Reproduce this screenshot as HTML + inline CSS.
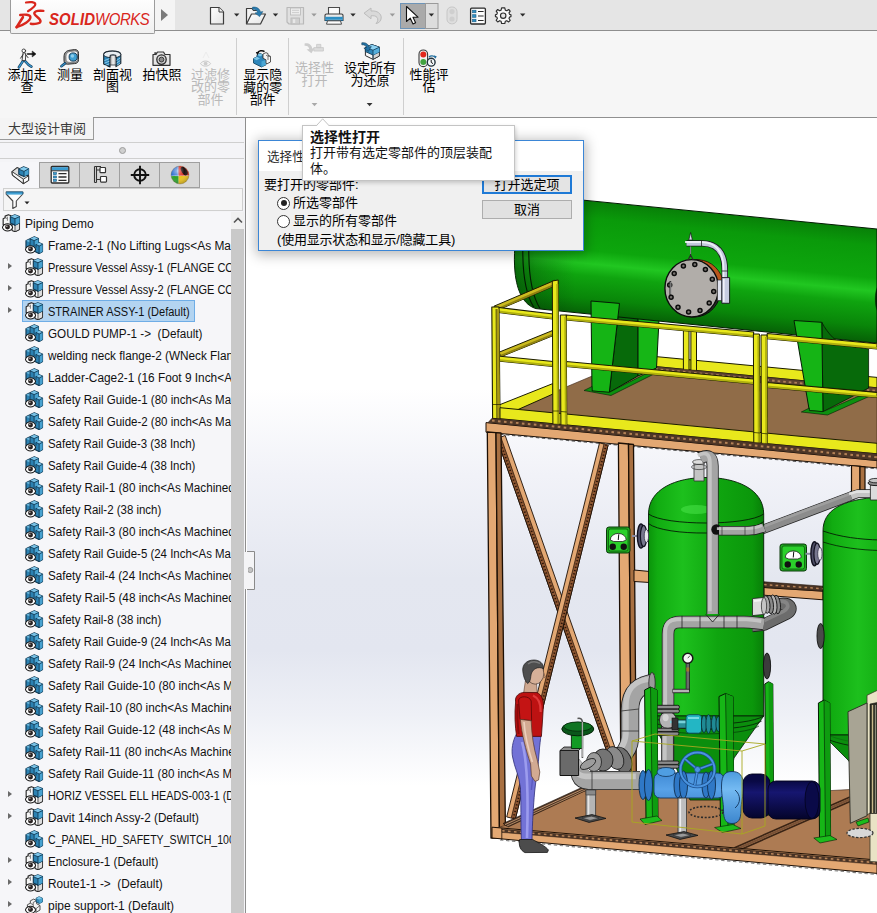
<!DOCTYPE html>
<html lang="zh"><head><meta charset="utf-8"><title>SOLIDWORKS</title>
<style>
html,body{margin:0;padding:0}
body{width:877px;height:913px;overflow:hidden;position:relative;background:#fff;font-family:"Liberation Sans","Noto Sans CJK SC",sans-serif;font-size:12px;color:#1a1a1a}
.abs{position:absolute}
#titlebar{left:0;top:0;width:877px;height:30px;background:#e5e5e5;border-bottom:1px solid #8e8e8e}
#ribbon{left:0;top:31px;width:877px;height:87px;background:#f6f6f6}
#ribline{left:93px;top:117px;width:784px;height:1px;background:#909090}
#logo{left:10px;top:-1px;width:145px;height:35px;background:linear-gradient(#fefefe,#f1f1f1);border:1px solid #9c9c9c;border-top:none;box-sizing:border-box;border-radius:0 0 2px 2px}
#logoext{left:154px;top:0;width:21px;height:30px;background:#f4f4f4}
.rb{position:absolute;text-align:center;font-size:13px;line-height:12.5px;color:#000;white-space:nowrap}
.rb.dis{color:#b9b9b9}
.sep{position:absolute;width:1px;background:#cfcfcf}
#left{left:0;top:118px;width:246px;height:795px;background:#f4f4f7;border-right:1px solid #8e8e8e;box-sizing:border-box;overflow:hidden}
#view{left:247px;top:118px;width:630px;height:795px;overflow:hidden;background:#fff}
#tree{position:absolute;left:0;top:94px;width:231px;height:701px;overflow:hidden;background:#f6f6f9}
.row{position:absolute;left:48px;height:22px;line-height:22px;white-space:nowrap;font-size:12px;color:#111;transform-origin:0 50%}
.ic{position:absolute;width:18.4px;height:18.4px}
.tri{position:absolute;left:8px;width:0;height:0;border-left:4.5px solid #6a6a6a;border-top:3.7px solid transparent;border-bottom:3.7px solid transparent}
.hl{position:absolute;background:#eee}
</style></head><body>
<svg width="0" height="0" style="position:absolute"><defs>
<linearGradient id="gb1" x1="0" y1="0" x2="1" y2="1"><stop offset="0" stop-color="#7cc4e6"/><stop offset="1" stop-color="#2f86b5"/></linearGradient>
<g id="eye"><path d="M0.4 13.8 C2.4 8.8 9 8.8 11 13.8 C9 18.8 2.4 18.8 0.4 13.8Z" fill="#fff" stroke="#161616" stroke-width="1.05"/><circle cx="5.7" cy="13.5" r="2.55" fill="#2a2424"/><circle cx="5" cy="12.7" r="0.8" fill="#c5bebb"/></g>
<symbol id="i-part" viewBox="0 0 19 19">
<path d="M1 5 L4.6 3.2 L5.2 3.5 L5.2 2.8 L9.6 0.7 L13.9 2.7 L13.9 6.6 L14.8 6.9 L18.2 8.5 L18.2 16 L14.6 18.2 L9.2 15.6 L1 11.8Z" fill="#2c82b2" stroke="#123a54" stroke-width="1.2" stroke-linejoin="round"/>
<path d="M5.2 2.8 L9.6 0.8 L13.9 2.7 L9.4 4.8Z" fill="#79c2e6"/>
<path d="M9.4 4.8 L13.9 2.7 L13.9 7.2 L11.4 8.6 L9.4 9.6Z" fill="#48a2d0"/>
<path d="M1 5 L4.6 3.3 L5.2 3.6 L5.2 6.8Z" fill="#6ab6dc"/>
<path d="M11.4 8.6 L14.8 6.9 L18.2 8.5 L14.6 10.4Z" fill="#79c2e6"/>
<path d="M14.6 10.4 L18.2 8.5 L18.2 16 L14.6 18.2Z" fill="#48a2d0"/>
<path d="M5.2 2.8 L5.2 9.6 M5.2 2.8 L9.4 4.8 L13.9 2.7 M9.4 4.8 L9.4 10.5 M11.4 8.6 L14.6 10.4 L18.2 8.5 M14.6 10.4 L14.6 18.2 M11.4 8.6 L11.4 12" fill="none" stroke="#123a54" stroke-width="0.9"/>
<use href="#eye"/>
</symbol>
<symbol id="i-assy" viewBox="0 0 19 19">
<path d="M1.2 9.4 L1.2 4.8 L3.2 3.8 L3.2 2.2 L6.6 0.7 L9.4 1.8 L10 9 L8 13 L1.2 11Z" fill="#f6f6f6" stroke="#2a2a2a" stroke-width="1.2" stroke-linejoin="round"/>
<path d="M3.2 3.8 L5.6 4.8 L5.6 2.8 M5.6 4.8 L5.6 7" fill="none" stroke="#4a4a4a" stroke-width="0.7"/>
<path d="M10.4 10 L13.4 11.4 L18.1 9.2 L18.1 16 L13.4 18.4 L10.4 17Z" fill="#f8f8f8" stroke="#2a2a2a" stroke-width="1.1" stroke-linejoin="round"/>
<path d="M13.4 11.4 L18.1 9.2 L18.1 16 L13.4 18.4Z" fill="#dedede" stroke="#2a2a2a" stroke-width="0.8"/>
<path d="M8.6 2.9 L13.2 0.8 L18.1 2.7 L18.1 9.2 L13.4 11.5 L8.6 9.3Z" fill="#2c82b2" stroke="#123a54" stroke-width="1.2" stroke-linejoin="round"/>
<path d="M8.6 2.9 L13.2 0.9 L18.1 2.7 L13.4 4.9Z" fill="#7cc4e8"/>
<path d="M13.4 4.9 L18.1 2.7 L18.1 9.2 L13.4 11.5Z" fill="#48a2d0"/>
<path d="M8.6 2.9 L13.4 4.9 L18.1 2.7 M13.4 4.9 L13.4 11.5" fill="none" stroke="#123a54" stroke-width="0.9"/>
<use href="#eye"/>
</symbol>
<symbol id="i-supp" viewBox="0 0 19 19">
<path d="M2.5 9 L5.5 7.5 L5.5 5 L9 3.2 L12 4.8 L12 8 L15.5 9.8 L15.5 14.5 L11.5 16.8 L2.5 12.5Z" fill="#f4f4f4" stroke="#4a4a4a" stroke-width="1" stroke-linejoin="round"/>
<path d="M5.5 7.5 L8.5 9 L8.5 6.6 L12 4.8 M8.5 9 L8.5 11.6 L11.5 13 L11.5 16.8 M11.5 13 L15.5 9.8" fill="none" stroke="#4a4a4a" stroke-width="0.8"/>
<path d="M11.5 2.2 L14.5 0.8 L18 2.2 L18 6.2 L14.8 7.8 L11.5 6.2Z" fill="#2f89b9" stroke="#174a66" stroke-width="0.9" stroke-linejoin="round"/>
<path d="M11.5 2.2 L14.5 0.9 L18 2.2 L14.8 3.8Z" fill="#7fc8ea"/>
<path d="M14.8 3.8 L18 2.2 L18 6.2 L14.8 7.8Z" fill="#4aa6d3"/>
<g transform="translate(0,0.5)"><use href="#eye"/></g>
</symbol>
<symbol id="i-tab1" viewBox="0 0 22 22">
<path d="M2 7.6 L7 3.6 L9.4 4.4 L9.4 10.4 L18.6 11.6 L18.6 16.4 L13.4 19.6 L2.4 11Z" fill="#dcdcdc" stroke="#2e2e2e" stroke-width="1.1" stroke-linejoin="round"/>
<path d="M2 7.6 L13.4 15.2 L13.4 19.6 L2.4 11Z" fill="#f6f6f6" stroke="#2e2e2e" stroke-width="0.9" stroke-linejoin="round"/>
<path d="M13.4 15.2 L18.6 11.8 L18.6 16.4 L13.4 19.6Z" fill="#fdfdfd" stroke="#2e2e2e" stroke-width="0.9" stroke-linejoin="round"/>
<path d="M8.8 5.2 L13.6 2.8 L18.6 4.8 L18.6 10.2 L14 12.6 L8.8 10.2Z" fill="#2c82b2" stroke="#123a54" stroke-width="1.1" stroke-linejoin="round"/>
<path d="M8.8 5.2 L13.6 2.9 L18.6 4.8 L14 7.4Z" fill="#86cdee"/>
<path d="M14 7.4 L18.6 4.8 L18.6 10.2 L14 12.6Z" fill="#48a2d0"/>
<path d="M8.8 5.2 L14 7.4 L18.6 4.8 M14 7.4 L14 12.6" fill="none" stroke="#123a54" stroke-width="0.9"/>
</symbol>
<symbol id="i-tab2" viewBox="0 0 20 20">
<rect x="1.2" y="1.5" width="17.6" height="16.5" rx="1" fill="#fbfbfb" stroke="#2b2b2b" stroke-width="1.3"/>
<rect x="2" y="2.2" width="16" height="3.2" fill="#3b9bd0"/>
<path d="M1.2 5.8 H18.8" stroke="#2b2b2b" stroke-width="1"/>
<rect x="3.5" y="7.6" width="3" height="2" fill="#3b9bd0" stroke="#1c5d84" stroke-width="0.6"/><rect x="3.5" y="11" width="3" height="2" fill="#3b9bd0" stroke="#1c5d84" stroke-width="0.6"/><rect x="3.5" y="14.3" width="3" height="2" fill="#3b9bd0" stroke="#1c5d84" stroke-width="0.6"/>
<path d="M8.5 8.6 H16.5 M8.5 12 H16.5 M8.5 15.3 H16.5" stroke="#2b2b2b" stroke-width="1.3"/>
</symbol>
<symbol id="i-tab3" viewBox="0 0 20 20">
<path d="M4.5 1.5 V17.5 M6.5 1.5 V17.5 M4.5 1.5 H6.5 M4.5 17.5 H6.5 M6.5 5 H10 M6.5 14.5 H10.5 M4.5 1.5 H11" fill="none" stroke="#333" stroke-width="1.1"/>
<rect x="10" y="2.5" width="5.5" height="5.2" rx="0.8" fill="#fff" stroke="#333" stroke-width="1.2"/>
<rect x="10.5" y="11.5" width="6" height="5.6" rx="0.8" fill="#fff" stroke="#333" stroke-width="1.2"/>
</symbol>
<symbol id="i-tab4" viewBox="0 0 20 20">
<circle cx="10" cy="10" r="5.8" fill="none" stroke="#111" stroke-width="1.9"/>
<path d="M10 0.8 V19.2 M0.8 10 H19.2" stroke="#111" stroke-width="1.9"/>
</symbol>
<symbol id="i-tab5" viewBox="0 0 20 20">
<radialGradient id="ballsh" cx="0.38" cy="0.3" r="0.75"><stop offset="0" stop-color="#fff" stop-opacity="0.55"/><stop offset="0.45" stop-color="#fff" stop-opacity="0"/><stop offset="1" stop-color="#000" stop-opacity="0.35"/></radialGradient>
<clipPath id="ballc"><circle cx="10" cy="10" r="9"/></clipPath>
<g clip-path="url(#ballc)">
<rect x="0" y="0" width="9" height="11" fill="#2e6fd0"/>
<path d="M8.4 0 H20 V10.6 L8.4 11Z" fill="#d8261a"/>
<path d="M8.4 11 L20 10.6 V20 H8.4Z" fill="#ebc21c"/>
<path d="M0 11 H8.4 V20 H0Z" fill="#2ea02c"/>
<path d="M8.4 0 C7.4 5 7.6 8 8.4 11 M0 11 C5 10.2 14 10.2 20 10.6" fill="none" stroke="#f4f4f4" stroke-width="0.6" opacity="0.7"/>
<ellipse cx="14.2" cy="6" rx="2.6" ry="4.8" transform="rotate(-33 14.2 6)" fill="#1e1010"/>
<rect x="0" y="0" width="20" height="20" fill="url(#ballsh)"/>
</g>
<circle cx="10" cy="10" r="9" fill="none" stroke="#6a5a3a" stroke-width="0.5" opacity="0.6"/>
</symbol>
<symbol id="i-filter" viewBox="0 0 26 20">
<path d="M1.2 2 H17.8 L17.8 4 L11.3 11 V16.5 L7.8 18.5 V11 L1.2 4Z" fill="#fdfdfd" stroke="#444" stroke-width="1.1" stroke-linejoin="round"/>
<path d="M1.5 2 H17.5 V4.6 H1.5Z" fill="#43a3d6"/>
<path d="M1.2 2 H17.8 V4" fill="none" stroke="#1f6a96" stroke-width="1"/>
<path d="M19.5 11.5 H24.5 L22 14.3Z" fill="#222"/>
</symbol>
</defs></svg>
<div id="titlebar" class="abs"></div>
<div id="logoext" class="abs"></div>
<div id="ribbon" class="abs"></div>
<div id="logo" class="abs"></div>
<div id="ribline" class="abs"></div>
<!-- logo -->
<svg class="abs" style="left:14px;top:0" width="32" height="30" viewBox="0 0 32 30">
<g fill="none" stroke="#d9261c" stroke-linecap="round" stroke-linejoin="round">
<path d="M12 2.5 C16 1.7 21 1.9 21.3 4.2 C21.6 6.6 17 9.4 14 11.2" stroke-width="2.2"/>
<path d="M6.2 15 C10 14.3 16.4 14.3 16.4 17.2 C16.4 20.6 9.5 25.2 2.6 27.2" stroke-width="2.4"/>
<path d="M8.9 17.2 L2.6 27.2" stroke-width="2.6"/>
<path d="M29.4 10.9 C26 10.4 20.6 10.7 20.3 13.2 C20 16 26.9 18.2 26.5 21.3 C26.2 23.8 20 24.3 16.8 23.8" stroke-width="2.4"/>
</g></svg>
<div class="abs" style="left:48.5px;top:10.5px;font-size:15.8px;line-height:18px;color:#d9261c;font-style:italic;white-space:nowrap;letter-spacing:-0.2px;transform:scaleX(0.945);transform-origin:0 50%"><b style="letter-spacing:0.1px">SOLID</b><span style="letter-spacing:-0.45px">WORKS</span></div>
<div class="abs" style="left:161px;top:9px;width:0;height:0;border-left:7px solid #7a7a7a;border-top:6.5px solid transparent;border-bottom:6.5px solid transparent"></div>
<!-- quick toolbar -->
<svg class="abs" style="left:200px;top:0" width="340" height="31" viewBox="200 0 340 31">
<defs><linearGradient id="pg" x1="0" y1="0" x2="1" y2="1"><stop offset="0" stop-color="#fff"/><stop offset="1" stop-color="#e4e4e4"/></linearGradient></defs>
<!-- new -->
<path d="M210.5 7.5 H219 L223.5 12 V24 H210.5Z" fill="url(#pg)" stroke="#3c3c3c" stroke-width="1.2" stroke-linejoin="round"/>
<path d="M219 7.5 V12 H223.5" fill="#f4f4f4" stroke="#3c3c3c" stroke-width="1"/>
<path d="M234 13.5 H239.4 L236.7 16.6Z" fill="#2a2a2a"/>
<!-- open -->
<path d="M246.5 24 V8.5 H252 L253.5 10.5 H258.5 V13" fill="#f2f2f2" stroke="#3c3c3c" stroke-width="1.2" stroke-linejoin="round"/>
<path d="M246.5 24 L251.5 14 H265.5 L260.5 24Z" fill="url(#pg)" stroke="#3c3c3c" stroke-width="1.2" stroke-linejoin="round"/>
<path d="M252.5 7.2 C256.5 6.6 259.8 8.6 260.4 12 L262.8 11.6 L259.6 16.6 L255 13 L257.6 12.5 C257.2 10.4 255.4 9 252.5 9.2Z" fill="#2a7cb0" stroke="#1b5a82" stroke-width="0.6"/>
<path d="M272.8 13.5 H278.2 L275.5 16.6Z" fill="#2a2a2a"/>
<!-- save disabled -->
<path d="M287 7.5 H303.5 V24 H289 L287 22Z" fill="#e0e0e0" stroke="#b9b9b9" stroke-width="1.2" stroke-linejoin="round"/>
<rect x="290.5" y="8" width="10" height="7" fill="#ededed" stroke="#bdbdbd" stroke-width="0.9"/>
<path d="M292 10.3 H299 M292 12.6 H299" stroke="#c4c4c4" stroke-width="0.8"/>
<rect x="291" y="18" width="8.5" height="6" fill="#d0d0d0" stroke="#b9b9b9" stroke-width="0.9"/>
<rect x="293" y="19.2" width="2.2" height="3.8" fill="#e8e8e8"/>
<path d="M311.3 13.5 H316.7 L314 16.6Z" fill="#9a9a9a"/>
<!-- print -->
<path d="M328.5 15 V7.5 H339.5 V15" fill="#fafafa" stroke="#4a4a4a" stroke-width="1.1"/>
<path d="M325 15.2 Q325 14 326.5 14 H341.5 Q343 14 343 15.2 V20.5 H325Z" fill="#e9e9e9" stroke="#3c3c3c" stroke-width="1.1"/>
<rect x="325.2" y="16.8" width="17.6" height="3" fill="#2d8fc4"/>
<path d="M325 20.5 H343" stroke="#1d5d85" stroke-width="1"/>
<path d="M327.5 20.8 H340.5 L341.5 24.2 H326.5Z" fill="#fdfdfd" stroke="#4a4a4a" stroke-width="1"/>
<path d="M350.3 13.5 H355.7 L353 16.6Z" fill="#2a2a2a"/>
<!-- undo disabled -->
<path d="M364 13.2 L371 8 V11 C377 10.4 381.5 13.5 381.2 18 C381 21 379 23 376 23.6 C378 21.6 378.4 19 377 17.3 C375.8 15.9 373.6 15.5 371 15.8 V18.8Z" fill="#d9d9d9" stroke="#bcbcbc" stroke-width="1" stroke-linejoin="round"/>
<path d="M389.7 13.5 H395.1 L392.4 16.6Z" fill="#9a9a9a"/>
<!-- select -->
<rect x="400.5" y="3.5" width="25" height="25" fill="#aaaaaa" stroke="#6d94b8" stroke-width="1"/>
<rect x="425.5" y="3.5" width="12.5" height="25" fill="#dddddd" stroke="#9a9a9a" stroke-width="1"/>
<path d="M406.5 6.5 L406.5 21.5 L410.3 18.2 L413 24 L415.6 22.8 L413 17.2 L418 17.2Z" fill="#fff" stroke="#111" stroke-width="1.1" stroke-linejoin="round"/>
<path d="M428.7 13.5 H434.1 L431.4 16.6Z" fill="#2a2a2a"/>
<!-- traffic disabled -->
<rect x="447" y="7" width="10" height="16.8" rx="4.6" fill="#dedede" stroke="#c6c6c6" stroke-width="1"/>
<circle cx="452" cy="11.6" r="2.6" fill="#cfcfcf"/><circle cx="452" cy="19" r="2.6" fill="#cfcfcf"/>
<!-- options -->
<rect x="470.6" y="8.2" width="14.8" height="15.8" rx="1" fill="#fdfdfd" stroke="#2a2a2a" stroke-width="1.3"/>
<rect x="472.6" y="10.2" width="3.4" height="2.6" fill="#2d8fc4" stroke="#1b5a82" stroke-width="0.6"/><rect x="472.6" y="14.7" width="3.4" height="2.6" fill="#2d8fc4" stroke="#1b5a82" stroke-width="0.6"/><rect x="472.6" y="19.2" width="3.4" height="2.6" fill="#2d8fc4" stroke="#1b5a82" stroke-width="0.6"/>
<path d="M478 11.5 H483.6 M478 16 H483.6 M478 20.5 H483.6" stroke="#2a2a2a" stroke-width="1.2"/>
<!-- gear -->
<g transform="translate(503.2 15.7)">
<path id="gearp" d="M-1.6 -7.8 H1.6 L2.1 -5.6 L3.6 -5 L5.5 -6.2 L7 -4.6 L5.8 -2.8 L6.4 -1.3 L7.8 -0.9 V0.9 L6.4 1.3 L5.8 2.8 L7 4.6 L5.5 6.2 L3.6 5 L2.1 5.6 L1.6 7.8 H-1.6 L-2.1 5.6 L-3.6 5 L-5.5 6.2 L-7 4.6 L-5.8 2.8 L-6.4 1.3 L-7.8 0.9 V-0.9 L-6.4 -1.3 L-5.8 -2.8 L-7 -4.6 L-5.5 -6.2 L-3.6 -5 L-2.1 -5.6Z" fill="#f8f8f8" stroke="#2e2e2e" stroke-width="1.15" stroke-linejoin="round"/>
<circle r="2.7" fill="#e5e5e5" stroke="#2e2e2e" stroke-width="1.15"/>
</g>
<path d="M520 13.5 H525.4 L522.7 16.6Z" fill="#2a2a2a"/>
</svg>
<!-- ribbon buttons -->
<div class="rb" style="left:-13px;top:68.5px;width:80px">添加走<br>查</div>
<div class="rb" style="left:30px;top:68.5px;width:80px">测量</div>
<div class="rb" style="left:72.5px;top:68.5px;width:80px">剖面视<br>图</div>
<div class="rb" style="left:122px;top:68.5px;width:80px">拍快照</div>
<div class="rb dis" style="left:170.5px;top:68.5px;width:80px">过滤修<br>改的零<br>部件</div>
<div class="rb" style="left:222.7px;top:69px;width:80px">显示隐<br>藏的零<br>部件</div>
<div class="rb dis" style="left:274.5px;top:62px;width:80px">选择性<br>打开</div>
<div class="rb" style="left:330px;top:62px;width:80px">设定所有<br>为还原</div>
<div class="rb" style="left:389px;top:68.5px;width:80px">性能评<br>估</div>
<div class="sep" style="left:236px;top:38px;height:77px"></div>
<div class="sep" style="left:288px;top:38px;height:77px"></div>
<div class="sep" style="left:403px;top:38px;height:77px"></div>
<svg class="abs" style="left:0;top:36px" width="460" height="80" viewBox="0 36 460 80">
<path d="M311.6 103 H317.4 L314.5 106.2Z" fill="#a9a9a9"/>
<path d="M366.7 103 H372.5 L369.6 106.2Z" fill="#333"/>
<!-- walk -->
<g stroke-linecap="round" stroke-linejoin="round" fill="none">
<path d="M23.4 60.4 L18.9 67.3" stroke="#173f5c" stroke-width="2.6"/><path d="M23.4 60.4 L18.9 67.3" stroke="#3b9ad2" stroke-width="1.3"/>
<path d="M24.4 60.4 L28.6 64.8 L31.4 66.6" stroke="#173f5c" stroke-width="2.6"/><path d="M24.4 60.4 L28.6 64.8 L31.4 66.6" stroke="#3b9ad2" stroke-width="1.3"/>
<circle cx="23.8" cy="50.8" r="1.8" fill="#fff" stroke="#333" stroke-width="0.9"/>
<path d="M23 53.2 L22 60.6 L25.4 60.6 L25.8 53.6Z" fill="#f4f4f4" stroke="#333" stroke-width="0.9"/>
<path d="M23 54.6 L20.6 58.2 M25.6 54.6 L28 57.6" stroke="#333" stroke-width="1"/>
<path d="M27.6 54 H34.4" stroke="#111" stroke-width="1.5"/>
<path d="M32.6 51.4 L35.8 54 L32.6 56.6Z" fill="#111" stroke="#111" stroke-width="0.8"/>
</g>
<!-- measure tape -->
<path d="M64 57 C64 52.5 66.5 50.6 70 50.2 L74.5 49.6 C77.4 49.5 78.5 51 78.5 53.4 V59.6 C78.5 62.2 77.2 63.4 74.6 63.6 L67.6 64.2 C65 64.2 64 62.6 64 60Z" fill="#9a9a9a" stroke="#2e2e2e" stroke-width="1"/>
<path d="M66 56.4 C66 53 68 51.6 70.6 51.4 L74.8 51 C77 51 77.6 52 77.6 53.8 V59 C77.6 61 76.8 61.8 74.8 62 L69.4 62.4 C67 62.4 66 61.2 66 59Z" fill="#f4f4f4" stroke="#555" stroke-width="0.6"/>
<circle cx="73.2" cy="57" r="4.1" fill="#3f9fd2" stroke="#173f5c" stroke-width="1"/>
<circle cx="72.4" cy="56" r="1.7" fill="#9bd6f0" opacity="0.85"/>
<path d="M65 63.4 L61.4 66.2" stroke="#173f5c" stroke-width="2.6" stroke-linecap="round"/><path d="M65 63.4 L61.4 66.2" stroke="#3b9ad2" stroke-width="1.2" stroke-linecap="round"/>
<!-- section view -->
<defs><linearGradient id="bore" x1="0" y1="0" x2="1" y2="0"><stop offset="0" stop-color="#8e8e8e"/><stop offset="0.5" stop-color="#f2f2f2"/><stop offset="1" stop-color="#b4b4b4"/></linearGradient></defs>
<path d="M103.7 54.6 C103.7 50 120.8 50 120.8 54.6 V63.4 L116 66.6 V57.6 H110 V67 L103.7 64Z" fill="#2d86ba" stroke="#15202a" stroke-width="1.1" stroke-linejoin="round"/>
<rect x="110" y="55" width="6" height="10" fill="url(#bore)" stroke="#15202a" stroke-width="0.7"/>
<path d="M103.7 54.6 C103.7 50 120.8 50 120.8 54.6 C120.8 56 118.6 57 116 57.6 V55.4 C114 54.6 111.6 54.6 110 55.4 V57.6 C106.4 57.2 103.7 56 103.7 54.6Z" fill="#e9eef2" stroke="#15202a" stroke-width="0.9"/>
<path d="M104.4 60.6 L109.4 58.6 M104.4 63.2 L109.4 61.2 M105 65.6 L109.4 63.8 M116.6 60.4 L120.2 58 M116.6 63 L120.2 60.6 M116.8 65.4 L120.2 63.2" stroke="#a8daf2" stroke-width="0.8"/>
<!-- camera -->
<path d="M153 54.5 H156 L157.5 52 H163.5 L165 54.5 H170 V65.3 H153Z" fill="#e6e6e6" stroke="#333" stroke-width="1.2" stroke-linejoin="round"/>
<rect x="154.3" y="52.3" width="2.2" height="1.6" fill="#333"/>
<circle cx="161.5" cy="59.6" r="4.7" fill="#d2d2d2" stroke="#2b2b2b" stroke-width="1.3"/>
<circle cx="161.5" cy="59.6" r="2.4" fill="#8a8a8a" stroke="#2b2b2b" stroke-width="0.9"/>
<!-- filter eye disabled -->
<path d="M200.5 63.6 C202.5 60.2 208.5 60.2 210.6 63.6 C208.5 67 202.5 67 200.5 63.6Z" fill="#f4f4f4" stroke="#c9c9c9" stroke-width="1"/>
<circle cx="205.6" cy="63.6" r="1.9" fill="#cdcdcd"/>
<path d="M203 58 L206 52 L209 58" fill="none" stroke="#ececec" stroke-width="1"/>
<!-- show hidden -->
<path d="M253.5 58.5 L257 56.8 V54.8 L260 53.4 L263 54.8 V58.2 L266 59.8 V64.8 L261.5 67 L253.5 63Z" fill="#2d86ba" stroke="#174a66" stroke-width="0.9" stroke-linejoin="round"/>
<path d="M257 54.8 L260 53.4 L263 54.8 L260 56.4Z M253.5 58.5 L257 56.8 L260 58.4 L256.5 60.2Z" fill="#7cc6e8"/>
<path d="M261.5 61.6 L266 59.8 V64.8 L261.5 67Z" fill="#4aa6d3"/>
<path d="M263 54 L266 52.6 L268 53.6 V55.2 L270.5 56.4 V62 L267 63.8 L266 63.2 V59.8 L263 58.2Z" fill="#f4f4f4" stroke="#444" stroke-width="0.9" stroke-linejoin="round"/>
<path d="M266 55.2 L268 56.2 V60 M268 56.2 L270.5 56.4" fill="none" stroke="#444" stroke-width="0.7"/>
<path d="M257.5 53 C258.5 50.6 262.5 50 264.5 51.6" fill="none" stroke="#111" stroke-width="1.6"/>
<path d="M255.8 52 L259.4 52 L257.3 55.2Z" fill="#111"/>
<!-- selective open disabled -->
<path d="M304.6 43.4 C309 42.8 311.8 45 312.2 48.4 L314.6 48 L311.4 53.2 L306.6 49.6 L309.2 49.1 C308.8 46.8 307.4 45.6 304.6 45.8Z" fill="#cdcdcd"/>
<path d="M313.8 47.6 H323.4 V51 H313.8Z M316.6 44.4 H320.8 V47.6 H316.6Z" fill="#dcdcdc" stroke="#c6c6c6" stroke-width="0.8"/>
<!-- set all resolved -->
<path d="M365.4 47.4 L371.8 44.6 L379.4 47.2 V56 L373 59.4 L365.4 55.6Z" fill="#f6f6f6" stroke="#2c2c2c" stroke-width="1" stroke-linejoin="round"/>
<path d="M373 51 L379.4 48 V56 L373 59.4Z" fill="#d4d4d4" stroke="#2c2c2c" stroke-width="0.8"/>
<path d="M365.4 47.4 L371.8 44.6 L379.4 47.2 V52 L373 55 L365.4 51.6Z" fill="#2d86ba" stroke="#143c58" stroke-width="0.9" stroke-linejoin="round"/>
<path d="M365.4 47.4 L371.8 44.7 L379.4 47.2 L373 50.2Z" fill="#8dd2f2"/>
<path d="M373 50.2 L379.4 47.2 V52 L373 55Z" fill="#55aedb"/>
<path d="M365.4 47.4 L373 50.2 L379.4 47.2 M373 50.2 V59.4" fill="none" stroke="#143c58" stroke-width="0.8"/>
<path d="M361.8 42.8 C365.6 42.2 368.4 44 368.9 47 L371.3 46.6 L368.3 51.4 L363.9 48.2 L366.5 47.7 C366.1 45.6 364.6 44.6 361.8 44.8Z" fill="#2373a6" stroke="#123a56" stroke-width="0.6"/>
<!-- performance -->
<rect x="419" y="50" width="8.6" height="16.6" rx="4.2" fill="#f1f1f1" stroke="#3a3a3a" stroke-width="1.1"/>
<circle cx="423.3" cy="54.6" r="3" fill="#e2281c"/>
<circle cx="423.3" cy="62" r="3" fill="#44a340"/>
<circle cx="431.2" cy="62.2" r="3.9" fill="#f6fafc" stroke="#22323c" stroke-width="1.4"/>
<path d="M431.2 59.8 V62.4 L433 63.6" fill="none" stroke="#111" stroke-width="1"/>
<path d="M429 57 C430.6 55.4 433.6 55.6 435 57.2" fill="none" stroke="#1d6b9c" stroke-width="1.3"/>
<path d="M434 55.2 L436.8 56.4 L435.2 58.8Z" fill="#1d6b9c"/>
</svg>
<div id="view" class="abs"><svg width="630" height="795" viewBox="247 118 630 795" style="position:absolute;left:0;top:0">
<defs>
<linearGradient id="bg" x1="0" y1="118" x2="0" y2="913" gradientUnits="userSpaceOnUse"><stop offset="0" stop-color="#ffffff"/><stop offset="0.34" stop-color="#ffffff"/><stop offset="0.45" stop-color="#f1f2f8"/><stop offset="0.58" stop-color="#e4e7f0"/><stop offset="0.67" stop-color="#e3e6f0"/><stop offset="0.75" stop-color="#eef0f6"/><stop offset="0.84" stop-color="#ffffff"/><stop offset="1" stop-color="#ffffff"/></linearGradient>
<linearGradient id="gTop" x1="600" y1="202" x2="589" y2="316" gradientUnits="userSpaceOnUse"><stop offset="0" stop-color="#088008"/><stop offset="0.15" stop-color="#0a9a0a"/><stop offset="0.43" stop-color="#0da60d"/><stop offset="0.545" stop-color="#21c721"/><stop offset="0.65" stop-color="#0fa40f"/><stop offset="0.85" stop-color="#098609"/><stop offset="1" stop-color="#065e06"/></linearGradient>
<linearGradient id="gT1" x1="648" y1="0" x2="764" y2="0" gradientUnits="userSpaceOnUse"><stop offset="0" stop-color="#0a920a"/><stop offset="0.08" stop-color="#11ac11"/><stop offset="0.3" stop-color="#1dc01d"/><stop offset="0.6" stop-color="#0fa50f"/><stop offset="0.9" stop-color="#0b970b"/><stop offset="1" stop-color="#087e08"/></linearGradient>
<linearGradient id="gT2" x1="823" y1="0" x2="940" y2="0" gradientUnits="userSpaceOnUse"><stop offset="0" stop-color="#0a920a"/><stop offset="0.08" stop-color="#11ac11"/><stop offset="0.3" stop-color="#1dc01d"/><stop offset="0.6" stop-color="#0fa50f"/><stop offset="1" stop-color="#088408"/></linearGradient>
<linearGradient id="gBlue2" x1="0" y1="770" x2="0" y2="825" gradientUnits="userSpaceOnUse"><stop offset="0" stop-color="#4a98dc"/><stop offset="0.35" stop-color="#74baf2"/><stop offset="1" stop-color="#3a84cc"/></linearGradient>
<linearGradient id="gNavy" x1="0" y1="781" x2="0" y2="819" gradientUnits="userSpaceOnUse"><stop offset="0" stop-color="#090944"/><stop offset="0.3" stop-color="#161670"/><stop offset="1" stop-color="#04042a"/></linearGradient>
<linearGradient id="gBlue" x1="0" y1="770" x2="0" y2="825" gradientUnits="userSpaceOnUse"><stop offset="0" stop-color="#3c86d2"/><stop offset="0.35" stop-color="#58a2e8"/><stop offset="1" stop-color="#2a6cb8"/></linearGradient>
</defs>
<rect x="247" y="118" width="630" height="795" fill="url(#bg)"/>
<path d="M246.5 551.5 H254.5 V589.5 H246.5" fill="#f4f4f6" stroke="#8a8a8a" stroke-width="1"/>
<circle cx="250.2" cy="570" r="2.6" fill="#c4c4c4" stroke="#8f8f8f" stroke-width="0.8"/>
<polygon points="655.0,356.5 877.0,377.4 877.0,387.8 655.0,366.5" fill="#e8e81c" stroke="#1c1c00" stroke-width="1.0" stroke-linejoin="round" />
<polygon points="683.4,330.0 689.0,330.5 689.0,371.0 683.4,370.4" fill="#e8e81c" stroke="#1c1c00" stroke-width="1.0" stroke-linejoin="round" />
<polygon points="690.9,330.0 696.5,330.5 696.5,371.0 690.9,370.4" fill="#e8e81c" stroke="#1c1c00" stroke-width="1.0" stroke-linejoin="round" />
<polygon points="655.0,366.5 877.0,387.8 877.0,394.0 651.0,371.8" fill="#5e4232" stroke="#2a1a10" stroke-width="0.5" stroke-linejoin="round" />
<path d="M655 369 L877 390.8" stroke="#b08058" stroke-width="1.8" stroke-dasharray="2.6 3" fill="none"/>
<polygon points="519.0,407.0 566.0,387.0 591.0,376.5 651.0,372.0 877.0,394.0 877.0,444.5 497.0,408.5" fill="#906c48" stroke="#3a2415" stroke-width="0.6" stroke-linejoin="round" />
<polygon points="499.0,405.0 553.0,383.5 553.0,394.0 499.0,418.0" fill="#e8e81c" stroke="#1c1c00" stroke-width="1.0" stroke-linejoin="round" />
<polygon points="637.8,308.0 659.5,310.0 656.5,368.0 637.8,376.0" fill="#16b616" stroke="#041c04" stroke-width="1.0" stroke-linejoin="round" />
<polygon points="619.5,303.4 637.8,308.0 637.8,376.0 609.3,392.4" fill="#076a0a" stroke="#041c04" stroke-width="1.0" stroke-linejoin="round" />
<path d="M545 196.4 L877 229 L877 343.2 L536 308.6 C524 305 517 292 515 272 C512 240 520 200 545 196.4Z" fill="url(#gTop)" stroke="#041c04" stroke-width="1" stroke-linejoin="round" />
<defs><linearGradient id="gHead" x1="514" y1="0" x2="575" y2="0" gradientUnits="userSpaceOnUse"><stop offset="0" stop-color="#043a06" stop-opacity="0.55"/><stop offset="0.35" stop-color="#043a06" stop-opacity="0.28"/><stop offset="1" stop-color="#043a06" stop-opacity="0"/></linearGradient></defs>
<path d="M575 199.4 L545 196.4 C520 200 512 240 515 272 C517 292 524 305 536 308.6 L575 312.4Z" fill="url(#gHead)" stroke="none" stroke-width="0" stroke-linejoin="round" />
<path d="M531.5 200 C519.5 225 519.5 285 534 307.5" fill="none" stroke="#031a03" stroke-width="1.1" stroke-linejoin="round" />
<path d="M537.5 199 C525.5 225 525.5 285 540 308.5" fill="none" stroke="#031a03" stroke-width="1.1" stroke-linejoin="round" />
<path d="M877.5 287 C874.6 292 874.6 306 877.5 311Z" fill="#052005" stroke="#052005" stroke-width="0.5" stroke-linejoin="round" />
<polygon points="591.0,301.0 619.5,303.4 609.3,392.4 592.0,391.0" fill="#15b415" stroke="#041c04" stroke-width="1.0" stroke-linejoin="round" />
<polygon points="584.0,390.5 592.0,386.5 592.0,391.0 609.3,392.4 655.0,369.0 659.0,371.5 611.0,395.5" fill="#0d900f" stroke="#041c04" stroke-width="0.6" stroke-linejoin="round" />
<path d="M821.8 322.3 C828 334 836.6 343 846 345.5 L868.6 349 L868.6 388 L823 411.7Z" fill="#076a0a" stroke="#041c04" stroke-width="0.8" stroke-linejoin="round" />
<polygon points="794.0,320.5 821.8,322.3 823.0,411.7 809.3,410.6" fill="#15b415" stroke="#041c04" stroke-width="1.0" stroke-linejoin="round" />
<polygon points="801.3,412.0 809.3,408.0 809.3,410.6 823.0,411.7 866.0,393.0 869.0,396.5 827.5,415.0" fill="#0d900f" stroke="#041c04" stroke-width="0.6" stroke-linejoin="round" />
<ellipse cx="694.4" cy="288.3" rx="26.6" ry="28.7" fill="#2a2a2a" stroke="#0a0a0a" stroke-width="1"/>
<path d="M699 259.8 A26.6 28.7 0 0 1 723.8 284 L718 284 A26.8 28.7 0 0 0 694 259.7Z" fill="#b9561c" stroke="#2a1206" stroke-width="0.8" stroke-linejoin="round" />
<ellipse cx="691.7" cy="288.3" rx="26.8" ry="28.7" fill="#b1ada9" stroke="#0d0d0d" stroke-width="1.4"/>
<circle cx="713.7" cy="291.6" r="2.0" fill="#77736f" stroke="#0c0c0c" stroke-width="1.5"/>
<circle cx="709.2" cy="303.1" r="2.0" fill="#77736f" stroke="#0c0c0c" stroke-width="1.5"/>
<circle cx="700.0" cy="310.6" r="2.0" fill="#77736f" stroke="#0c0c0c" stroke-width="1.5"/>
<circle cx="688.6" cy="312.1" r="2.0" fill="#77736f" stroke="#0c0c0c" stroke-width="1.5"/>
<circle cx="678.0" cy="307.2" r="2.0" fill="#77736f" stroke="#0c0c0c" stroke-width="1.5"/>
<circle cx="671.1" cy="297.3" r="2.0" fill="#77736f" stroke="#0c0c0c" stroke-width="1.5"/>
<circle cx="669.7" cy="285.0" r="2.0" fill="#77736f" stroke="#0c0c0c" stroke-width="1.5"/>
<circle cx="674.2" cy="273.5" r="2.0" fill="#77736f" stroke="#0c0c0c" stroke-width="1.5"/>
<circle cx="683.4" cy="266.0" r="2.0" fill="#77736f" stroke="#0c0c0c" stroke-width="1.5"/>
<circle cx="694.8" cy="264.5" r="2.0" fill="#77736f" stroke="#0c0c0c" stroke-width="1.5"/>
<circle cx="705.4" cy="269.4" r="2.0" fill="#77736f" stroke="#0c0c0c" stroke-width="1.5"/>
<circle cx="712.3" cy="279.3" r="2.0" fill="#77736f" stroke="#0c0c0c" stroke-width="1.5"/>
<path d="M670.3 281 V295" fill="none" stroke="#333" stroke-width="1.8" stroke-linejoin="round" />
<path d="M670.9 282 V294" fill="none" stroke="#d0d0d0" stroke-width="0.7" stroke-linejoin="round" />
<polygon points="717.4,280.0 722.0,280.0 722.0,300.6 717.4,300.6" fill="#dfe2ee" stroke="#222" stroke-width="0.7" stroke-linejoin="round" />
<path d="M686.5 243.4 H702 C717 243.4 724.8 253 724.8 270 V279" fill="none" stroke="#15151c" stroke-width="6.4" stroke-linecap="butt" stroke-linejoin="round"/>
<path d="M686.5 243.4 H702 C717 243.4 724.8 253 724.8 270 V279" fill="none" stroke="#c2c8dc" stroke-width="4.800000000000001" stroke-linecap="butt" stroke-linejoin="round"/>
<path d="M686.5 243.4 H702 C717 243.4 724.8 253 724.8 270 V279" fill="none" stroke="#f2f3fa" stroke-width="1.92" stroke-linecap="butt" stroke-linejoin="round" transform="translate(-1.41,-1.41)" opacity="0.9"/>
<line x1="701.5" y1="240.4" x2="701.5" y2="246.4" stroke="#222" stroke-width="0.8"/>
<line x1="721.6" y1="271" x2="728" y2="271" stroke="#222" stroke-width="0.8"/>
<polygon points="721.8,277.6 729.6,277.6 729.6,303.3 721.8,303.3" fill="#c6cbe0" stroke="#15151c" stroke-width="0.9" stroke-linejoin="round" />
<line x1="723.8" y1="279" x2="723.8" y2="302" stroke="#f2f3fa" stroke-width="1.6"/>
<path d="M690.6 232.5 L688.8 240 H692.4Z" fill="#d8dbe8" stroke="#15151c" stroke-width="0.7" stroke-linejoin="round" />
<path d="M690.6 246.5 V255 L688 260 M690.6 255 L693.2 260" fill="none" stroke="#2a2a2a" stroke-width="1.1" stroke-linejoin="round" />
<path d="M690.6 246.5 V254" fill="none" stroke="#c8c8d4" stroke-width="0.6" stroke-linejoin="round" />
<polygon points="496.0,310.8 557.0,284.8 555.0,280.2 494.0,306.2" fill="#cbbb1e" stroke="#1c1c00" stroke-width="1.0" stroke-linejoin="round" />
<polygon points="495.2,309.0 556.2,283.0 557.0,284.8 496.0,310.8" fill="#8f8210" stroke="none" stroke-width="0" stroke-linejoin="round" />
<polygon points="500.9,356.8 553.9,335.3 552.1,330.7 499.1,352.2" fill="#cbbb1e" stroke="#1c1c00" stroke-width="1.0" stroke-linejoin="round" />
<polygon points="500.2,355.0 553.2,333.5 553.9,335.3 500.9,356.8" fill="#8f8210" stroke="none" stroke-width="0" stroke-linejoin="round" />
<polygon points="494.7,312.1 552.7,319.1 553.3,314.1 495.3,307.1" fill="#e8e81c" stroke="#1c1c00" stroke-width="1.05" stroke-linejoin="round" />
<polygon points="494.9,310.1 552.9,317.1 552.7,319.1 494.7,312.1" fill="#b0b00e" stroke="none" stroke-width="0" stroke-linejoin="round" />
<polygon points="497.8,361.0 552.8,366.5 553.2,361.5 498.2,356.0" fill="#e8e81c" stroke="#1c1c00" stroke-width="1.05" stroke-linejoin="round" />
<polygon points="498.0,359.0 553.0,364.5 552.8,366.5 497.8,361.0" fill="#b0b00e" stroke="none" stroke-width="0" stroke-linejoin="round" />
<polygon points="491.8,307.0 499.0,307.0 500.0,418.6 492.6,418.6" fill="#e8e81c" stroke="#1c1c00" stroke-width="1.1" stroke-linejoin="round" />
<polygon points="496.0,309.0 499.0,309.0 500.0,418.6 496.8,418.6" fill="#a89a14" stroke="none" stroke-width="0" stroke-linejoin="round" />
<line x1="496" y1="309" x2="496.8" y2="418.6" stroke="#1c1c00" stroke-width="0.6"/>
<line x1="492.3" y1="404.5" x2="500.3" y2="404.5" stroke="#1c1c00" stroke-width="0.7"/>
<polygon points="500.0,407.7 566.0,414.0 797.0,436.0 877.0,443.3 877.0,453.8 797.0,446.5 566.0,424.9 500.0,418.7" fill="#e8e81c" stroke="#1c1c00" stroke-width="1.0" stroke-linejoin="round" />
<polygon points="565.8,320.1 753.3,337.1 753.7,331.9 566.2,314.9" fill="#e8e81c" stroke="#1c1c00" stroke-width="1.05" stroke-linejoin="round" />
<polygon points="566.0,318.0 753.5,335.0 753.3,337.1 565.8,320.1" fill="#b0b00e" stroke="none" stroke-width="0" stroke-linejoin="round" />
<polygon points="766.8,338.8 876.8,349.0 877.2,343.8 767.2,333.6" fill="#e8e81c" stroke="#1c1c00" stroke-width="1.05" stroke-linejoin="round" />
<polygon points="767.0,336.7 877.0,346.9 876.8,349.0 766.8,338.8" fill="#b0b00e" stroke="none" stroke-width="0" stroke-linejoin="round" />
<polygon points="565.8,366.6 753.3,384.1 753.7,378.9 566.2,361.4" fill="#e8e81c" stroke="#1c1c00" stroke-width="1.05" stroke-linejoin="round" />
<polygon points="566.0,364.5 753.5,382.0 753.3,384.1 565.8,366.6" fill="#b0b00e" stroke="none" stroke-width="0" stroke-linejoin="round" />
<polygon points="766.8,387.6 876.8,397.6 877.2,392.4 767.2,382.4" fill="#e8e81c" stroke="#1c1c00" stroke-width="1.05" stroke-linejoin="round" />
<polygon points="767.0,385.5 877.0,395.5 876.8,397.6 766.8,387.6" fill="#b0b00e" stroke="none" stroke-width="0" stroke-linejoin="round" />
<polygon points="552.3,281.0 558.2,280.0 558.8,425.0 552.9,425.0" fill="#e8e81c" stroke="#1c1c00" stroke-width="1.0" stroke-linejoin="round" />
<polygon points="556.3,284.0 558.2,284.0 558.8,425.0 556.9,425.0" fill="#b0b00e" stroke="none" stroke-width="0" stroke-linejoin="round" />
<polygon points="560.3,315.0 566.2,315.0 566.8,426.0 560.9,425.5" fill="#e8e81c" stroke="#1c1c00" stroke-width="1.0" stroke-linejoin="round" />
<polygon points="564.3,317.0 566.2,317.0 566.8,426.0 564.9,425.5" fill="#b0b00e" stroke="none" stroke-width="0" stroke-linejoin="round" />
<line x1="552.8" y1="411" x2="558.7" y2="411" stroke="#1c1c00" stroke-width="0.7"/>
<line x1="560.8" y1="411.5" x2="566.7" y2="412" stroke="#1c1c00" stroke-width="0.7"/>
<polygon points="753.4,334.0 759.4,334.0 759.8,447.5 753.8,447.0" fill="#e8e81c" stroke="#1c1c00" stroke-width="1.0" stroke-linejoin="round" />
<polygon points="757.4,336.0 759.4,336.0 759.8,447.5 757.8,447.3" fill="#b0b00e" stroke="none" stroke-width="0" stroke-linejoin="round" />
<polygon points="761.0,335.0 767.0,335.0 767.4,448.3 761.4,447.8" fill="#e8e81c" stroke="#1c1c00" stroke-width="1.0" stroke-linejoin="round" />
<polygon points="765.0,337.0 767.0,337.0 767.4,448.3 765.4,448.1" fill="#b0b00e" stroke="none" stroke-width="0" stroke-linejoin="round" />
<line x1="753.8" y1="432.5" x2="759.8" y2="433" stroke="#1c1c00" stroke-width="0.7"/>
<line x1="761.3" y1="433.3" x2="767.3" y2="433.8" stroke="#1c1c00" stroke-width="0.7"/>
<polygon points="486.0,422.6 877.0,460.6 877.0,467.9 486.0,432.2" fill="#e3a873" stroke="#1c0f05" stroke-width="1.0" stroke-linejoin="round" />
<polygon points="492.0,418.2 877.0,453.8 877.0,460.6 488.0,422.6" fill="#4e3727" stroke="#2a1a10" stroke-width="0.5" stroke-linejoin="round" />
<path d="M492 420.6 L877 457.2" stroke="#b48256" stroke-width="2" stroke-dasharray="2.6 3.4" fill="none"/>
<path d="M500 434.2 L877 468.8" stroke="#2a2a2a" stroke-width="1.2" stroke-dasharray="3.4 2.6" fill="none" opacity="0.75"/>
<polygon points="496.8,438.5 610.4,761.5 618.8,758.5 505.2,435.5" fill="#e3a873" stroke="#1c0f05" stroke-width="0.9" stroke-linejoin="round" />
<polygon points="500.8,437.1 614.4,760.1 610.4,761.5 496.8,438.5" fill="#8e5732" stroke="none" stroke-width="0" stroke-linejoin="round" />
<line x1="500.8" y1="437.1" x2="614.4" y2="760.1" stroke="#1c0f05" stroke-width="0.7"/>
<line x1="498.7" y1="437.8" x2="612.3" y2="760.8" stroke="#2a1408" stroke-width="1.8" stroke-dasharray="1.2 2.2"/>
<line x1="496.8" y1="438.5" x2="610.4" y2="761.5" stroke="#1c0f05" stroke-width="0.9"/>
<polygon points="599.5,442.9 506.7,816.9 515.3,819.1 608.1,445.1" fill="#e3a873" stroke="#1c0f05" stroke-width="0.9" stroke-linejoin="round" />
<polygon points="604.0,444.1 511.2,818.1 515.3,819.1 608.1,445.1" fill="#8e5732" stroke="none" stroke-width="0" stroke-linejoin="round" />
<line x1="604.0" y1="444.1" x2="511.2" y2="818.1" stroke="#1c0f05" stroke-width="0.7"/>
<line x1="606.1" y1="444.6" x2="513.3" y2="818.6" stroke="#2a1408" stroke-width="1.8" stroke-dasharray="1.2 2.2"/>
<line x1="608.1" y1="445.1" x2="515.3" y2="819.1" stroke="#1c0f05" stroke-width="0.9"/>
<polygon points="487.3,432.0 496.0,432.6 499.5,838.0 491.0,838.0" fill="#e3a873" stroke="#1c0f05" stroke-width="1.3" stroke-linejoin="round" />
<polygon points="496.0,432.6 501.0,433.0 505.5,838.0 499.5,838.0" fill="#a87042" stroke="#1c0f05" stroke-width="1.3" stroke-linejoin="round" />
<polygon points="618.4,443.0 628.5,444.0 631.5,792.0 621.0,792.0" fill="#e3a873" stroke="#1c0f05" stroke-width="1.3" stroke-linejoin="round" />
<polygon points="628.5,444.0 633.5,444.4 636.5,792.0 631.5,792.0" fill="#a87042" stroke="#1c0f05" stroke-width="1.3" stroke-linejoin="round" />
<polygon points="634.0,570.0 650.0,571.5 650.0,582.5 634.0,581.5" fill="#e3a873" stroke="#1c0f05" stroke-width="1.0" stroke-linejoin="round" />
<polygon points="851.5,465.5 860.0,466.3 860.0,492.0 851.5,492.0" fill="#e3a873" stroke="#1c0f05" stroke-width="1.2" stroke-linejoin="round" />
<polygon points="860.0,466.3 865.0,466.8 865.0,492.0 860.0,492.0" fill="#a87042" stroke="#1c0f05" stroke-width="1.2" stroke-linejoin="round" />
<polygon points="764.0,587.5 823.0,591.2 823.0,599.8 764.0,595.2" fill="#e3a873" stroke="#1c0f05" stroke-width="1.0" stroke-linejoin="round" />
<polygon points="764.0,581.8 823.0,586.2 823.0,591.2 764.0,587.5" fill="#4a3426" stroke="#1c0f05" stroke-width="0.6" stroke-linejoin="round" />
<path d="M764 584.6 L823 588.7" stroke="#b88458" stroke-width="1.5" stroke-dasharray="2.6 3.2" fill="none"/>
<polygon points="506.5,825.0 584.0,791.0 650.0,784.0 823.0,791.0 877.0,788.0 877.0,862.0 493.0,829.0" fill="#ad7b53" stroke="#3a2415" stroke-width="0.6" stroke-linejoin="round" />
<polygon points="503.0,823.5 585.0,786.0 588.0,789.5 508.0,827.0" fill="#4a3426" stroke="#1c0f05" stroke-width="0.6" stroke-linejoin="round" />
<path d="M505 824.6 L586 787.6" stroke="#c89a70" stroke-width="0.9" fill="none"/>
<path d="M507 826 L587.4 789" stroke="#c89a70" stroke-width="0.8" fill="none"/>
<path d="M734 848 L850 797 M742 849 L858 798" stroke="#3a2415" stroke-width="1.6" fill="none"/>
<path d="M738 848.5 L854 797.5" stroke="#7a5236" stroke-width="2" fill="none"/>
<polygon points="492.0,827.2 877.0,860.0 877.0,873.4 492.0,838.0" fill="#e3a873" stroke="#1c0f05" stroke-width="1.0" stroke-linejoin="round" />
<path d="M500 840 L877 874.6" stroke="#2a2a2a" stroke-width="1.1" stroke-dasharray="3.4 2.6" fill="none" opacity="0.6"/>
<polygon points="502.0,829.0 877.0,861.0 877.0,864.6 502.0,832.4" fill="#4a3426" stroke="#2a1a10" stroke-width="0.4" stroke-linejoin="round" />
<path d="M502 830.7 L877 862.8" stroke="#b88458" stroke-width="1.6" stroke-dasharray="2.6 3.4" fill="none"/>
<line x1="501.8" y1="828" x2="501.8" y2="840" stroke="#1c0f05" stroke-width="0.8"/>
<path d="M823 531 C823 511 840 499.5 880 497 L880 735 L823 735Z" fill="url(#gT2)" stroke="#041c04" stroke-width="0.9" stroke-linejoin="round" />
<path d="M823 735 L880 735 L880 800 L848 760Z" fill="#0b8e0d" stroke="#041c04" stroke-width="0.8" stroke-linejoin="round" />
<path d="M823 531 C840 537 860 539.5 880 540" fill="none" stroke="#041c04" stroke-width="0.9" stroke-linejoin="round" />
<path d="M823 542 C840 547.5 860 550 880 550.5" fill="none" stroke="#041c04" stroke-width="0.8" stroke-linejoin="round" />
<path d="M823 737.5 C840 745 860 748 880 748" fill="none" stroke="#041c04" stroke-width="0.8" stroke-linejoin="round" />
<path d="M823 733 C840 741 860 744 880 744" fill="none" stroke="#0d6a10" stroke-width="0.7" stroke-linejoin="round" />
<ellipse cx="820.6" cy="636" rx="3.6" ry="12.5" fill="#4a4a4a" stroke="#111" stroke-width="0.9"/>
<polygon points="818.4,703.0 824.0,700.0 829.8,703.0 830.6,839.0 819.5,839.0" fill="#16b616" stroke="#041c04" stroke-width="1.0" stroke-linejoin="round" />
<polygon points="824.0,700.0 829.8,703.0 830.6,839.0 825.5,839.0" fill="#0e9c10" stroke="none" stroke-width="0" stroke-linejoin="round" />
<line x1="824" y1="700" x2="825.5" y2="839" stroke="#041c04" stroke-width="0.6"/>
<polygon points="813.8,838.0 830.0,835.5 837.0,839.5 820.0,843.0" fill="#1cbc1c" stroke="#041c04" stroke-width="0.6" stroke-linejoin="round" />
<path d="M760 530.5 L853 495.4" fill="none" stroke="#222" stroke-width="9.4" stroke-linecap="butt" stroke-linejoin="round"/>
<path d="M760 530.5 L853 495.4" fill="none" stroke="#8c8c8c" stroke-width="7.800000000000001" stroke-linecap="butt" stroke-linejoin="round"/>
<path d="M760 530.5 L853 495.4" fill="none" stroke="#a0a0a0" stroke-width="2.82" stroke-linecap="butt" stroke-linejoin="round" transform="translate(-2.07,-2.07)" opacity="0.9"/>
<path d="M851 496 L858 493.6 H872" fill="none" stroke="#222" stroke-width="8.8" stroke-linecap="butt" stroke-linejoin="round"/>
<path d="M851 496 L858 493.6 H872" fill="none" stroke="#c4c4c4" stroke-width="7.200000000000001" stroke-linecap="butt" stroke-linejoin="round"/>
<path d="M851 496 L858 493.6 H872" fill="none" stroke="#e4e4e4" stroke-width="2.64" stroke-linecap="butt" stroke-linejoin="round" transform="translate(-1.94,-1.94)" opacity="0.9"/>
<polygon points="870.4,485.0 880.0,485.0 880.0,500.0 870.4,500.0" fill="#dcdcdc" stroke="#222" stroke-width="0.8" stroke-linejoin="round" />
<ellipse cx="876" cy="483" rx="8" ry="2.6" fill="#8a8a8a" stroke="#111" stroke-width="0.9"/>
<ellipse cx="876" cy="480.6" rx="7" ry="2.2" fill="#c4c4c4" stroke="#111" stroke-width="0.8"/>
<polygon points="764.8,684.0 768.5,681.7 772.8,684.0 773.6,815.0 766.0,815.0" fill="#16b616" stroke="#041c04" stroke-width="1.0" stroke-linejoin="round" />
<polygon points="768.5,681.7 772.8,684.0 773.6,815.0 770.0,815.0" fill="#0e9c10" stroke="none" stroke-width="0" stroke-linejoin="round" />
<path d="M648.5 514 C648.5 489 676 477.5 706 477.5 C736 477.5 763.7 489 763.7 514 L763.7 716 L648.5 716Z" fill="url(#gT1)" stroke="#041c04" stroke-width="0.9" stroke-linejoin="round" />
<path d="M648.5 716 L763.7 716 L734 758 L726 800 L690 800 L672 758Z" fill="#0b8e0d" stroke="#041c04" stroke-width="0.8" stroke-linejoin="round" />
<path d="M648.5 514 C665 526 747 526 763.7 514" fill="none" stroke="#041c04" stroke-width="0.9" stroke-linejoin="round" />
<path d="M648.5 523.6 C665 536.5 747 536.5 763.7 521.5" fill="none" stroke="#041c04" stroke-width="0.9" stroke-linejoin="round" />
<path d="M648.5 716 C665 727 747 727 763.7 716" fill="none" stroke="#041c04" stroke-width="0.8" stroke-linejoin="round" />
<path d="M650.5 721 C667 732 745 732 761.7 721" fill="none" stroke="#041c04" stroke-width="0.8" stroke-linejoin="round" />
<path d="M653 726 C669 736.5 743 736.5 759 726" fill="none" stroke="#063a08" stroke-width="0.7" stroke-linejoin="round" />
<ellipse cx="696" cy="509.5" rx="15" ry="4.5" fill="#4ae44a" opacity="0.55"/>
<polygon points="694.0,462.0 704.0,462.0 704.0,481.0 694.0,481.0" fill="#c4c4c4" stroke="#333" stroke-width="0.8" stroke-linejoin="round" />
<ellipse cx="699" cy="462" rx="6.5" ry="2.4" fill="#ddd" stroke="#333" stroke-width="0.7"/>
<ellipse cx="699" cy="467" rx="7.5" ry="2.6" fill="none" stroke="#333" stroke-width="0.7"/>
<path d="M700.5 458 Q712.6 452 712.6 466 V614" fill="none" stroke="#222" stroke-width="12.2" stroke-linecap="butt" stroke-linejoin="round"/>
<path d="M700.5 458 Q712.6 452 712.6 466 V614" fill="none" stroke="#a4a4a4" stroke-width="10.6" stroke-linecap="butt" stroke-linejoin="round"/>
<path d="M700.5 458 Q712.6 452 712.6 466 V614" fill="none" stroke="#c8c8c8" stroke-width="3.6599999999999997" stroke-linecap="butt" stroke-linejoin="round" transform="translate(-2.68,-2.68)" opacity="0.9"/>
<circle cx="716.5" cy="529.5" r="5.2" fill="#111"/>
<path d="M719 530.7 H748 Q757 530.7 764 527.5" fill="none" stroke="#222" stroke-width="9.6" stroke-linecap="butt" stroke-linejoin="round"/>
<path d="M719 530.7 H748 Q757 530.7 764 527.5" fill="none" stroke="#a4a4a4" stroke-width="8.0" stroke-linecap="butt" stroke-linejoin="round"/>
<path d="M719 530.7 H748 Q757 530.7 764 527.5" fill="none" stroke="#c8c8c8" stroke-width="2.88" stroke-linecap="butt" stroke-linejoin="round" transform="translate(-2.11,-2.11)" opacity="0.9"/>
<line x1="722" y1="526" x2="722" y2="535.6" stroke="#333" stroke-width="0.7"/>
<line x1="745" y1="526" x2="745" y2="535.6" stroke="#333" stroke-width="0.7"/>
<line x1="754" y1="526" x2="754" y2="535.6" stroke="#333" stroke-width="0.7"/>
<path d="M752 626 L764 624.6 L786 614 Q792.5 610.5 789.5 606 Q786.5 602.5 778 604.5" fill="none" stroke="#222" stroke-width="12.4" stroke-linecap="butt" stroke-linejoin="round"/>
<path d="M752 626 L764 624.6 L786 614 Q792.5 610.5 789.5 606 Q786.5 602.5 778 604.5" fill="none" stroke="#6c6c6c" stroke-width="10.8" stroke-linecap="butt" stroke-linejoin="round"/>
<path d="M752 626 L764 624.6 L786 614 Q792.5 610.5 789.5 606 Q786.5 602.5 778 604.5" fill="none" stroke="#888888" stroke-width="3.7199999999999998" stroke-linecap="butt" stroke-linejoin="round" transform="translate(-2.73,-2.73)" opacity="0.9"/>
<path d="M668 760 V634 Q668 622 680 622 H744 Q756 622.6 764 624" fill="none" stroke="#222" stroke-width="12.5" stroke-linecap="butt" stroke-linejoin="round"/>
<path d="M668 760 V634 Q668 622 680 622 H744 Q756 622.6 764 624" fill="none" stroke="#a4a4a4" stroke-width="10.9" stroke-linecap="butt" stroke-linejoin="round"/>
<path d="M668 760 V634 Q668 622 680 622 H744 Q756 622.6 764 624" fill="none" stroke="#c8c8c8" stroke-width="3.75" stroke-linecap="butt" stroke-linejoin="round" transform="translate(-2.75,-2.75)" opacity="0.9"/>
<line x1="682" y1="615.8" x2="682" y2="628.3" stroke="#222" stroke-width="0.8"/>
<line x1="700" y1="615.8" x2="700" y2="628.3" stroke="#222" stroke-width="0.8"/>
<line x1="724" y1="615.8" x2="724" y2="628.3" stroke="#222" stroke-width="0.8"/>
<line x1="737" y1="615.8" x2="737" y2="628.3" stroke="#222" stroke-width="0.8"/>
<path d="M705.6 614 L712.6 622 L719.6 614" fill="none" stroke="#222" stroke-width="0.9" stroke-linejoin="round" />
<ellipse cx="777" cy="604.5" rx="3.4" ry="9.2" fill="#8a8a8a" stroke="#161616" stroke-width="0.9" transform="rotate(-6 777 604.5)"/>
<ellipse cx="773.5" cy="604.5" rx="3.4" ry="9.6" fill="#b0b0b0" stroke="#161616" stroke-width="0.9" transform="rotate(-6 773.5 604.5)"/>
<ellipse cx="770" cy="604.5" rx="3.4" ry="9.2" fill="#8a8a8a" stroke="#161616" stroke-width="0.9" transform="rotate(-6 770 604.5)"/>
<ellipse cx="766.5" cy="604.5" rx="3.4" ry="8.8" fill="#a8a8a8" stroke="#161616" stroke-width="0.9" transform="rotate(-6 766.5 604.5)"/>
<polygon points="752.5,598.6 764.0,597.4 764.0,614.4 752.5,615.6" fill="#dcdcdc" stroke="#222" stroke-width="0.8" stroke-linejoin="round" />
<line x1="754" y1="601" x2="763" y2="600" stroke="#f4f4f4" stroke-width="2"/>
<ellipse cx="764" cy="606" rx="2.6" ry="8.5" fill="#c4c4c4" stroke="#222" stroke-width="0.7"/>
<ellipse cx="767" cy="666" rx="3.6" ry="13" fill="#3c3c3c" stroke="#111" stroke-width="0.9"/>
<path d="M687.8 663 V691" fill="none" stroke="#222" stroke-width="4.2" stroke-linejoin="round" />
<path d="M687.8 663 V691" fill="none" stroke="#6a6a6a" stroke-width="2.6" stroke-linejoin="round" />
<path d="M687.8 667.5 V671.5" fill="none" stroke="#a07a30" stroke-width="2.8" stroke-linejoin="round" />
<path d="M672.5 691 H689.6" fill="none" stroke="#222" stroke-width="4.4" stroke-linejoin="round" />
<path d="M673 691 H689" fill="none" stroke="#b4b4b4" stroke-width="2.6" stroke-linejoin="round" />
<circle cx="687.8" cy="658.2" r="5" fill="#f6f6f6" stroke="#161616" stroke-width="1.5"/>
<path d="M687.8 658.2 L690 655.6" fill="none" stroke="#333" stroke-width="0.8" stroke-linejoin="round" />
<rect x="606.5" y="527" width="23.5" height="26" rx="2.5" fill="#1ea61e" stroke="#0a3a0a" stroke-width="1"/>
<rect x="608.5" y="529" width="19.5" height="22" rx="2" fill="#2bd02b" stroke="#0a4a0a" stroke-width="0.7"/>
<path d="M610.25 540.0 A8 6.6 0 0 1 626.25 540.0 L622.75 541.5 H613.75Z" fill="#fff" stroke="#222" stroke-width="0.8"/>
<line x1="618.25" y1="540.0" x2="618.75" y2="534.28" stroke="#111" stroke-width="1"/>
<circle cx="612.75" cy="546.76" r="3.2" fill="#111"/><circle cx="623.75" cy="546.76" r="3.2" fill="#111"/>
<rect x="780" y="544" width="26.5" height="27" rx="2.5" fill="#1ea61e" stroke="#0a3a0a" stroke-width="1"/>
<rect x="782" y="546" width="22.5" height="23" rx="2" fill="#2bd02b" stroke="#0a4a0a" stroke-width="0.7"/>
<path d="M785.25 557.5 A8 6.6 0 0 1 801.25 557.5 L797.75 559.0 H788.75Z" fill="#fff" stroke="#222" stroke-width="0.8"/>
<line x1="793.25" y1="557.5" x2="793.75" y2="551.56" stroke="#111" stroke-width="1"/>
<circle cx="787.75" cy="564.52" r="3.2" fill="#111"/><circle cx="798.75" cy="564.52" r="3.2" fill="#111"/>
<line x1="632" y1="536" x2="641" y2="536" stroke="#8a8aa0" stroke-width="2"/>
<ellipse cx="641" cy="536" rx="3.6" ry="12" fill="#4e4e66" stroke="#12121f" stroke-width="1.4"/>
<ellipse cx="643.6" cy="536" rx="3.2" ry="10.6" fill="#77778e" stroke="#12121f" stroke-width="1.2"/>
<ellipse cx="646.4" cy="536" rx="2.2" ry="6.5" fill="#e9e9ee" stroke="#33334a" stroke-width="0.8"/>
<line x1="805.5" y1="553.8" x2="814.5" y2="553.8" stroke="#8a8aa0" stroke-width="2"/>
<ellipse cx="814.5" cy="553.8" rx="3.6" ry="12" fill="#4e4e66" stroke="#12121f" stroke-width="1.4"/>
<ellipse cx="817.1" cy="553.8" rx="3.2" ry="10.6" fill="#77778e" stroke="#12121f" stroke-width="1.2"/>
<ellipse cx="819.9" cy="553.8" rx="2.2" ry="6.5" fill="#e9e9ee" stroke="#33334a" stroke-width="0.8"/>
<path d="M655 683 C640 684 630 692 630 710 V738 Q629 752 616 761" fill="none" stroke="#222" stroke-width="18.5" stroke-linecap="butt" stroke-linejoin="round"/>
<path d="M655 683 C640 684 630 692 630 710 V738 Q629 752 616 761" fill="none" stroke="#a4a4a4" stroke-width="16.9" stroke-linecap="butt" stroke-linejoin="round"/>
<path d="M655 683 C640 684 630 692 630 710 V738 Q629 752 616 761" fill="none" stroke="#c8c8c8" stroke-width="5.55" stroke-linecap="butt" stroke-linejoin="round" transform="translate(-4.07,-4.07)" opacity="0.9"/>
<line x1="621" y1="731" x2="639" y2="731" stroke="#333" stroke-width="0.8"/>
<line x1="621" y1="711" x2="639" y2="709" stroke="#333" stroke-width="0.8"/>
<ellipse cx="652" cy="683" rx="3.2" ry="10.5" fill="#9a9a9a" stroke="#222" stroke-width="0.8"/>
<ellipse cx="622" cy="760" rx="9" ry="13.5" fill="#6e6e6e" stroke="#1a1a1a" stroke-width="0.9" transform="rotate(-25 622 760)"/>
<ellipse cx="615" cy="758" rx="8" ry="12" fill="#8a8a8a" stroke="#1a1a1a" stroke-width="0.8" transform="rotate(-25 615 758)"/>
<ellipse cx="603" cy="760" rx="10" ry="11" fill="#747474" stroke="#1a1a1a" stroke-width="0.9"/>
<ellipse cx="594" cy="762" rx="7.5" ry="9.5" fill="#9a9a9a" stroke="#1a1a1a" stroke-width="0.8"/>
<path d="M640 780.5 H590 C580 780 577 773 585 766" fill="none" stroke="#222" stroke-width="19" stroke-linecap="butt" stroke-linejoin="round"/>
<path d="M640 780.5 H590 C580 780 577 773 585 766" fill="none" stroke="#a4a4a4" stroke-width="17.4" stroke-linecap="butt" stroke-linejoin="round"/>
<path d="M640 780.5 H590 C580 780 577 773 585 766" fill="none" stroke="#c8c8c8" stroke-width="5.7" stroke-linecap="butt" stroke-linejoin="round" transform="translate(-4.18,-4.18)" opacity="0.9"/>
<line x1="592" y1="771" x2="592" y2="790" stroke="#333" stroke-width="0.8"/>
<ellipse cx="588" cy="764" rx="8.5" ry="4" fill="#9c9c9c" stroke="#1a1a1a" stroke-width="0.8" transform="rotate(-30 588 764)"/>
<polygon points="586.0,790.0 595.6,790.0 595.6,817.0 586.0,817.0" fill="#b5b5b5" stroke="#333" stroke-width="0.8" stroke-linejoin="round" />
<line x1="588.5" y1="791" x2="588.5" y2="816" stroke="#e6e6e6" stroke-width="1.6"/>
<polygon points="586.0,790.0 595.6,790.0 595.6,795.0 586.0,795.0" fill="#8a8a8a" stroke="#333" stroke-width="0.6" stroke-linejoin="round" />
<polygon points="575.0,818.0 592.0,814.6 606.0,818.4 589.0,822.4" fill="#4a4a4a" stroke="#111" stroke-width="0.8" stroke-linejoin="round" />
<polygon points="582.0,818.0 591.5,816.2 599.0,818.2 590.0,820.4" fill="#9a9a9a" stroke="#222" stroke-width="0.5" stroke-linejoin="round" />
<polygon points="560.0,750.5 578.6,750.5 578.6,775.5 560.0,775.5" fill="#6a6a6a" stroke="#101010" stroke-width="1.0" stroke-linejoin="round" />
<polygon points="560.0,750.5 564.0,747.0 582.0,747.0 578.6,750.5" fill="#8e8e8e" stroke="#101010" stroke-width="0.8" stroke-linejoin="round" />
<polygon points="571.4,733.0 582.6,733.0 582.6,748.5 571.4,748.5" fill="#129a24" stroke="#042408" stroke-width="0.9" stroke-linejoin="round" />
<ellipse cx="577.8" cy="729" rx="16" ry="6.8" fill="#0a561a" stroke="#042408" stroke-width="1"/>
<ellipse cx="577.8" cy="726.6" rx="14" ry="4.6" fill="#0f7422" stroke="#042408" stroke-width="0.7"/>
<path d="M582.4 758 V722 Q582 717.5 577.5 718.5" fill="none" stroke="#555" stroke-width="1.6" stroke-linejoin="round" />
<path d="M582.4 757 V722" fill="none" stroke="#ddd" stroke-width="0.7" stroke-linejoin="round" />
<path d="M667.5 705 V770" fill="none" stroke="#222" stroke-width="12.5" stroke-linecap="butt" stroke-linejoin="round"/>
<path d="M667.5 705 V770" fill="none" stroke="#a4a4a4" stroke-width="10.9" stroke-linecap="butt" stroke-linejoin="round"/>
<path d="M667.5 705 V770" fill="none" stroke="#c8c8c8" stroke-width="3.75" stroke-linecap="butt" stroke-linejoin="round" transform="translate(-2.75,-2.75)" opacity="0.9"/>
<ellipse cx="667.8" cy="720" rx="8.4" ry="8.6" fill="#b4b4b4" stroke="#222" stroke-width="0.9"/>
<ellipse cx="665.6" cy="717.6" rx="3" ry="3.6" fill="#dcdcdc" opacity="0.8"/>
<rect x="655.95" y="705.3" width="23.5" height="3.6" rx="1.7" fill="#8c8c8c" stroke="#141414" stroke-width="0.9"/>
<rect x="655.95" y="709.3" width="23.5" height="3.6" rx="1.7" fill="#8c8c8c" stroke="#141414" stroke-width="0.9"/>
<rect x="656.45" y="728.2" width="22.5" height="3.4" rx="1.7" fill="#8c8c8c" stroke="#141414" stroke-width="0.9"/>
<rect x="656.45" y="732" width="22.5" height="3.4" rx="1.7" fill="#8c8c8c" stroke="#141414" stroke-width="0.9"/>
<rect x="656.45" y="761" width="22.5" height="3.4" rx="1.7" fill="#8c8c8c" stroke="#141414" stroke-width="0.9"/>
<rect x="656.45" y="764.8" width="22.5" height="3.4" rx="1.7" fill="#8c8c8c" stroke="#141414" stroke-width="0.9"/>
<path d="M672 724 H724" fill="none" stroke="#222" stroke-width="9" stroke-linecap="butt" stroke-linejoin="round"/>
<path d="M672 724 H724" fill="none" stroke="#2a8f98" stroke-width="7.4" stroke-linecap="butt" stroke-linejoin="round"/>
<path d="M672 724 H724" fill="none" stroke="#7fd8e0" stroke-width="2.6999999999999997" stroke-linecap="butt" stroke-linejoin="round" transform="translate(-1.98,-1.98)" opacity="0.9"/>
<rect x="686" y="714.7" width="15.5" height="18.5" rx="3" fill="#23b6c4" stroke="#0a4a50" stroke-width="0.9"/>
<line x1="688" y1="718" x2="699" y2="718" stroke="#8fe6ee" stroke-width="1.6"/>
<ellipse cx="704" cy="724" rx="2.6" ry="8.6" fill="#1f8a94" stroke="#062a30" stroke-width="0.8"/>
<ellipse cx="708.5" cy="724" rx="2.6" ry="9.4" fill="#1f8a94" stroke="#062a30" stroke-width="0.8"/>
<ellipse cx="714" cy="724" rx="2.6" ry="8.6" fill="#1f8a94" stroke="#062a30" stroke-width="0.8"/>
<ellipse cx="718.5" cy="724" rx="2.6" ry="7.6" fill="#1f8a94" stroke="#062a30" stroke-width="0.8"/>
<rect x="672" y="718" width="6" height="12" fill="#333" stroke="#111" stroke-width="0.6"/>
<polygon points="644.6,690.0 650.5,687.0 657.0,690.0 658.0,820.0 646.0,820.0" fill="#16b616" stroke="#041c04" stroke-width="1.0" stroke-linejoin="round" />
<polygon points="650.5,687.0 657.0,690.0 658.0,820.0 652.5,820.0" fill="#0e9c10" stroke="none" stroke-width="0" stroke-linejoin="round" />
<line x1="650.5" y1="687" x2="652.5" y2="820" stroke="#041c04" stroke-width="0.6"/>
<polygon points="640.0,819.0 657.0,816.0 662.0,820.5 645.0,824.5" fill="#1cbc1c" stroke="#041c04" stroke-width="0.6" stroke-linejoin="round" />
<polygon points="719.0,696.5 725.5,693.5 733.0,696.5 734.0,828.0 720.5,828.0" fill="#16b616" stroke="#041c04" stroke-width="1.0" stroke-linejoin="round" />
<polygon points="725.5,693.5 733.0,696.5 734.0,828.0 728.0,828.0" fill="#0e9c10" stroke="none" stroke-width="0" stroke-linejoin="round" />
<line x1="725.5" y1="693.5" x2="728" y2="828" stroke="#041c04" stroke-width="0.6"/>
<polygon points="714.6,827.5 733.0,824.5 741.0,828.5 722.5,832.5" fill="#1cbc1c" stroke="#041c04" stroke-width="0.6" stroke-linejoin="round" />
<rect x="654" y="773" width="70" height="25" rx="6" fill="url(#gBlue)" stroke="#12365c" stroke-width="0.9"/>
<ellipse cx="643" cy="785" rx="4" ry="14.5" fill="#2f78c6" stroke="#0e2c4c" stroke-width="0.9"/>
<ellipse cx="648.5" cy="785" rx="4" ry="15.5" fill="#2f78c6" stroke="#0e2c4c" stroke-width="0.9"/>
<ellipse cx="678" cy="785" rx="4" ry="13" fill="#2f78c6" stroke="#0e2c4c" stroke-width="0.9"/>
<ellipse cx="683.5" cy="785" rx="4" ry="14" fill="#2f78c6" stroke="#0e2c4c" stroke-width="0.9"/>
<ellipse cx="706" cy="785" rx="4" ry="13" fill="#2f78c6" stroke="#0e2c4c" stroke-width="0.9"/>
<ellipse cx="711.5" cy="785" rx="4" ry="14" fill="#2f78c6" stroke="#0e2c4c" stroke-width="0.9"/>
<ellipse cx="666" cy="772" rx="9" ry="4.5" fill="#4f9ee2" stroke="#12365c" stroke-width="0.8"/>
<path d="M721.5 786 C721.5 774 726 771.5 732 771.5 C739 771.5 743.5 775 743.5 786 C743.5 797 741 802 741 810 C741 820 738 823.5 732 823.5 C726 823.5 723.5 820 723.5 810 C723.5 802 721.5 797 721.5 786Z" fill="url(#gBlue2)" stroke="#12365c" stroke-width="0.9" stroke-linejoin="round" />
<path d="M735 790 C741 795 741 803 735 808" fill="none" stroke="#12365c" stroke-width="0.9" stroke-linejoin="round" />
<circle cx="697.5" cy="769.5" r="17" fill="none" stroke="#1c4f8c" stroke-width="3.6"/>
<circle cx="697.5" cy="769.5" r="17" fill="none" stroke="#4a94e0" stroke-width="2"/>
<line x1="697.5" y1="769.5" x2="694.7" y2="785.3" stroke="#1c4f8c" stroke-width="3"/>
<line x1="697.5" y1="769.5" x2="694.7" y2="785.3" stroke="#4a94e0" stroke-width="1.6"/>
<line x1="697.5" y1="769.5" x2="685.2" y2="759.2" stroke="#1c4f8c" stroke-width="3"/>
<line x1="697.5" y1="769.5" x2="685.2" y2="759.2" stroke="#4a94e0" stroke-width="1.6"/>
<line x1="697.5" y1="769.5" x2="712.5" y2="764.0" stroke="#1c4f8c" stroke-width="3"/>
<line x1="697.5" y1="769.5" x2="712.5" y2="764.0" stroke="#4a94e0" stroke-width="1.6"/>
<circle cx="697.5" cy="769.5" r="3" fill="#4a94e0" stroke="#1c4f8c" stroke-width="0.8"/>
<polygon points="678.0,798.0 686.5,798.0 686.5,834.0 678.0,834.0" fill="#bdbdbd" stroke="#333" stroke-width="0.8" stroke-linejoin="round" />
<line x1="680.3" y1="799" x2="680.3" y2="833" stroke="#ececec" stroke-width="1.6"/>
<polygon points="666.0,835.0 684.0,831.6 698.0,835.4 680.0,839.4" fill="#4a4a4a" stroke="#111" stroke-width="0.8" stroke-linejoin="round" />
<polygon points="673.0,835.0 683.0,833.2 691.0,835.2 681.0,837.4" fill="#9a9a9a" stroke="#222" stroke-width="0.5" stroke-linejoin="round" />
<ellipse cx="706" cy="812" rx="17" ry="5.5" fill="none" stroke="#2a2a2a" stroke-width="1.6" stroke-dasharray="2 1.6"/>
<rect x="743" y="774" width="27" height="44" rx="9" fill="url(#gNavy)" stroke="#03031c" stroke-width="0.9"/>
<rect x="768" y="781" width="52" height="38" rx="8" fill="url(#gNavy)" stroke="#03031c" stroke-width="0.9"/>
<ellipse cx="812" cy="800" rx="7" ry="18.5" fill="#0a0a48" stroke="#03031c" stroke-width="0.8"/>
<path d="M632 741 L742 751 L742 834 L632 822Z M742 751 L765 744 L765 826 L742 834 M632 741 L655 734 L765 744" fill="none" stroke="#a8a820" stroke-width="0.9"/>
<path d="M516.5 734 C512.5 741 511.2 750 512.6 757 C514.5 768 519.5 776 520.4 788 C521.2 802 520.6 822 521.4 840 L532 840 C532.4 822 533.4 806 534.6 792 C536 778 538.6 764 539.2 752 C539.6 745 540.6 740 541 734Z" fill="#7272d6" stroke="#2e2e7a" stroke-width="0.8" stroke-linejoin="round" />
<path d="M522 742 C527 760 528.6 790 527 838" fill="none" stroke="#9c9cee" stroke-width="2.6" stroke-linejoin="round" />
<path d="M533.5 745 C534.5 760 533 775 531.4 790" fill="none" stroke="#5a5ac0" stroke-width="1.4" stroke-linejoin="round" />
<path d="M519.6 839.5 L532.6 839.5 C538 842.5 546 846.5 548.4 850 L547.4 852.4 L525 852.6 C520.6 850.5 518.4 846 519.6 839.5Z" fill="#4c4c4c" stroke="#141414" stroke-width="0.8" stroke-linejoin="round" />
<path d="M525.4 681 L536.4 683 L537.4 694.5 L523.4 694.5Z" fill="#cfa890" stroke="#5a3a2a" stroke-width="0.6" stroke-linejoin="round" />
<path d="M515.6 702 C514.6 696 519 692.8 524 692.4 L537 692.6 C541.6 694.6 543.6 700 543.4 706 L542.4 722 L541.4 736.4 L516.6 736.4 C515 726 514.4 714 515.6 702Z" fill="#bd1212" stroke="#4a0606" stroke-width="0.8" stroke-linejoin="round" />
<path d="M533 695.5 C538.6 698 541 703 540.6 712" fill="none" stroke="#e03a3a" stroke-width="2.2" stroke-linejoin="round" />
<path d="M517.5 704 C517 714 517.6 726 518.6 734" fill="none" stroke="#8c0a0a" stroke-width="2" stroke-linejoin="round" />
<ellipse cx="535.2" cy="673.4" rx="8.6" ry="10.8" fill="#d6b098" stroke="#4a3a30" stroke-width="0.7"/>
<path d="M543.4 668.6 C544 663.6 539.6 660 534 660 C526.6 660 522 664.6 522.8 671.4 C523.4 676.8 525 681 527.6 683.6 C529.6 682.4 530.6 679.6 530.8 676.4 C531 673 532.6 670.4 535 668.8 C538 667 541 667.6 543.4 668.6Z" fill="#4e4e4e" stroke="#1e1e1e" stroke-width="0.7" stroke-linejoin="round" />
<path d="M528 664 C531 661.6 536 661.4 540 663.4" fill="none" stroke="#7a7a7a" stroke-width="1.4" stroke-linejoin="round" />
<path d="M543.6 673 L545.4 677 L543.4 677.8" fill="none" stroke="#7a5a4a" stroke-width="0.8" stroke-linejoin="round" />
<path d="M518.6 700 C519.6 695.6 529.4 695.6 531.2 701 L531.6 720.6 L520 719.4Z" fill="#c41414" stroke="#4a0606" stroke-width="0.7" stroke-linejoin="round" />
<path d="M520.4 719.4 L531.2 720.8 C531.6 734 533.6 748 537.2 759.6 L539.8 772 L538.6 780 L535 781.4 L531.4 776 L530.6 764 C526 750 521.6 734 520.4 719.4Z" fill="#d2aa92" stroke="#5a3a2a" stroke-width="0.7" stroke-linejoin="round" />
<path d="M524 722 C525 736 528.6 750 532.4 762" fill="none" stroke="#ecd0be" stroke-width="1.6" stroke-linejoin="round" />
<polygon points="867.0,695.3 880.0,689.0 880.0,862.0 870.0,861.6 870.0,813.0 867.0,815.0" fill="#e9e3c5" stroke="#3a3a2a" stroke-width="0.8" stroke-linejoin="round" />
<polygon points="870.0,704.0 880.0,702.0 880.0,813.5 870.0,813.5" fill="#2e2e24" stroke="#1a1a12" stroke-width="0.6" stroke-linejoin="round" />
<line x1="872.5" y1="705" x2="872.5" y2="813" stroke="#c9b88a" stroke-width="1.4"/>
<line x1="875.5" y1="705" x2="875.5" y2="813" stroke="#8a8a7a" stroke-width="1.2"/>
<polygon points="848.0,711.7 867.0,703.0 867.0,815.7 850.3,823.3" fill="#a8a494" stroke="#2a2a22" stroke-width="0.9" stroke-linejoin="round" />
<ellipse cx="860" cy="833" rx="13" ry="4.6" fill="#d8d8d8" stroke="#333" stroke-width="1.2" stroke-dasharray="2.4 1.6"/>
<polygon points="856.0,822.0 868.0,818.0 869.0,822.0 858.0,826.0" fill="#1cbc1c" stroke="#041c04" stroke-width="0.6" stroke-linejoin="round" />
</svg></div>
<div id="left" class="abs">
<div class="abs" style="left:0;top:0;width:93px;height:21px;border-right:1px solid #9a9a9a;border-bottom:1px solid #9a9a9a;background:#f4f4f4"></div>
<div class="abs" style="left:8px;top:1px;font-size:13px;line-height:20px;color:#3a3a3a;white-space:nowrap">大型设计审阅</div>
<div class="abs" style="left:0;top:24px;width:244px;height:1px;background:#cfcfcf"></div>
<div class="abs" style="left:0;top:40px;width:244px;height:1px;background:#cfcfcf"></div>
<div class="abs" style="left:119px;top:29px;width:5px;height:5px;border-radius:50%;background:#cfcfcf;border:1px solid #9c9c9c;box-sizing:content-box"></div>
<div class="abs" style="left:0;top:44px;width:200px;height:26px;background:#d8d8d8;border-top:1px solid #9f9f9f;border-bottom:1px solid #9f9f9f;box-sizing:border-box"></div>
<div class="abs" style="left:0;top:44px;width:39px;height:27px;background:#f6f6f9;border-right:1px solid #9f9f9f"></div>
<div class="abs" style="left:79px;top:44px;width:1px;height:26px;background:#9f9f9f"></div>
<div class="abs" style="left:119px;top:44px;width:1px;height:26px;background:#9f9f9f"></div>
<div class="abs" style="left:159px;top:44px;width:1px;height:26px;background:#9f9f9f"></div>
<div class="abs" style="left:199px;top:44px;width:1px;height:26px;background:#9f9f9f"></div>
<svg class="abs" style="left:10px;top:46px" width="22" height="22" viewBox="0 0 22 22"><use href="#i-tab1"/></svg>
<svg class="abs" style="left:50px;top:47px" width="20" height="20" viewBox="0 0 20 20"><use href="#i-tab2"/></svg>
<svg class="abs" style="left:90px;top:47px" width="20" height="20" viewBox="0 0 20 20"><use href="#i-tab3"/></svg>
<svg class="abs" style="left:130px;top:47px" width="20" height="20" viewBox="0 0 20 20"><use href="#i-tab4"/></svg>
<svg class="abs" style="left:170px;top:47px" width="20" height="20" viewBox="0 0 20 20"><use href="#i-tab5"/></svg>
<div class="abs" style="left:3px;top:70px;width:240px;height:23px;border:1px solid #d0d0d0;box-sizing:border-box;background:#f5f5f5"></div>
<svg class="abs" style="left:5px;top:72px" width="26" height="20" viewBox="0 0 26 20"><use href="#i-filter"/></svg>
<div class="abs" style="left:231px;top:94px;width:13px;height:701px;background:#f1f1f1"></div>
<div class="abs" style="left:231px;top:111px;width:13px;height:684px;background:#c9c9c9"></div>
<svg class="abs" style="left:233px;top:98px" width="10" height="8" viewBox="0 0 10 8"><path d="M1 6.5 L5 2.5 L9 6.5" fill="none" stroke="#555" stroke-width="1.6"/></svg>
<div id="tree">
<svg class="ic" style="left:2.3px;top:1.7px" viewBox="0 0 19 19"><use href="#i-assy"/></svg>
<div class="row" style="left:25px;top:1px;transform:scaleX(1.0)">Piping Demo</div>
<svg class="ic" style="left:25.3px;top:23.7px" viewBox="0 0 19 19"><use href="#i-part"/></svg>
<div class="row" style="left:48px;top:23px;transform:scaleX(0.992)">Frame-2-1 (No Lifting Lugs&lt;As Ma</div>
<div class="tri" style="top:51px"></div>
<svg class="ic" style="left:25.3px;top:45.7px" viewBox="0 0 19 19"><use href="#i-assy"/></svg>
<div class="row" style="left:48px;top:45px;transform:scaleX(0.917)">Pressure Vessel Assy-1 (FLANGE CO</div>
<div class="tri" style="top:73px"></div>
<svg class="ic" style="left:25.3px;top:67.7px" viewBox="0 0 19 19"><use href="#i-assy"/></svg>
<div class="row" style="left:48px;top:67px;transform:scaleX(0.917)">Pressure Vessel Assy-2 (FLANGE CO</div>
<div class="abs" style="left:22px;top:88px;width:173px;height:22px;background:#b3d4f1;border:1px solid #6fadE6;box-sizing:border-box"></div>
<div class="tri" style="top:95px"></div>
<svg class="ic" style="left:25.3px;top:89.7px" viewBox="0 0 19 19"><use href="#i-assy"/></svg>
<div class="row" style="left:48px;top:89px;transform:scaleX(0.918)">STRAINER ASSY-1 (Default)</div>
<svg class="ic" style="left:25.3px;top:111.7px" viewBox="0 0 19 19"><use href="#i-part"/></svg>
<div class="row" style="left:48px;top:111px;transform:scaleX(0.975)">GOULD PUMP-1 -&gt;&nbsp; (Default)</div>
<svg class="ic" style="left:25.3px;top:133.7px" viewBox="0 0 19 19"><use href="#i-part"/></svg>
<div class="row" style="left:48px;top:133px;transform:scaleX(0.98)">welding neck flange-2 (WNeck Flan</div>
<svg class="ic" style="left:25.3px;top:155.7px" viewBox="0 0 19 19"><use href="#i-part"/></svg>
<div class="row" style="left:48px;top:155px;transform:scaleX(0.987)">Ladder-Cage2-1 (16 Foot 9 Inch&lt;As</div>
<svg class="ic" style="left:25.3px;top:177.7px" viewBox="0 0 19 19"><use href="#i-part"/></svg>
<div class="row" style="left:48px;top:177px;transform:scaleX(0.958)">Safety Rail Guide-1 (80 inch&lt;As Ma</div>
<svg class="ic" style="left:25.3px;top:199.7px" viewBox="0 0 19 19"><use href="#i-part"/></svg>
<div class="row" style="left:48px;top:199px;transform:scaleX(0.958)">Safety Rail Guide-2 (80 inch&lt;As Ma</div>
<svg class="ic" style="left:25.3px;top:221.7px" viewBox="0 0 19 19"><use href="#i-part"/></svg>
<div class="row" style="left:48px;top:221px;transform:scaleX(0.952)">Safety Rail Guide-3 (38 Inch)</div>
<svg class="ic" style="left:25.3px;top:243.7px" viewBox="0 0 19 19"><use href="#i-part"/></svg>
<div class="row" style="left:48px;top:243px;transform:scaleX(0.952)">Safety Rail Guide-4 (38 Inch)</div>
<svg class="ic" style="left:25.3px;top:265.7px" viewBox="0 0 19 19"><use href="#i-part"/></svg>
<div class="row" style="left:48px;top:265px;transform:scaleX(0.978)">Safety Rail-1 (80 inch&lt;As Machined</div>
<svg class="ic" style="left:25.3px;top:287.7px" viewBox="0 0 19 19"><use href="#i-part"/></svg>
<div class="row" style="left:48px;top:287px;transform:scaleX(0.954)">Safety Rail-2 (38 inch)</div>
<svg class="ic" style="left:25.3px;top:309.7px" viewBox="0 0 19 19"><use href="#i-part"/></svg>
<div class="row" style="left:48px;top:309px;transform:scaleX(0.978)">Safety Rail-3 (80 inch&lt;As Machined</div>
<svg class="ic" style="left:25.3px;top:331.7px" viewBox="0 0 19 19"><use href="#i-part"/></svg>
<div class="row" style="left:48px;top:331px;transform:scaleX(0.954)">Safety Rail Guide-5 (24 Inch&lt;As Ma</div>
<svg class="ic" style="left:25.3px;top:353.7px" viewBox="0 0 19 19"><use href="#i-part"/></svg>
<div class="row" style="left:48px;top:353px;transform:scaleX(0.975)">Safety Rail-4 (24 Inch&lt;As Machined</div>
<svg class="ic" style="left:25.3px;top:375.7px" viewBox="0 0 19 19"><use href="#i-part"/></svg>
<div class="row" style="left:48px;top:375px;transform:scaleX(0.978)">Safety Rail-5 (48 inch&lt;As Machined</div>
<svg class="ic" style="left:25.3px;top:397.7px" viewBox="0 0 19 19"><use href="#i-part"/></svg>
<div class="row" style="left:48px;top:397px;transform:scaleX(0.954)">Safety Rail-8 (38 inch)</div>
<svg class="ic" style="left:25.3px;top:419.7px" viewBox="0 0 19 19"><use href="#i-part"/></svg>
<div class="row" style="left:48px;top:419px;transform:scaleX(0.954)">Safety Rail Guide-9 (24 Inch&lt;As Ma</div>
<svg class="ic" style="left:25.3px;top:441.7px" viewBox="0 0 19 19"><use href="#i-part"/></svg>
<div class="row" style="left:48px;top:441px;transform:scaleX(0.975)">Safety Rail-9 (24 Inch&lt;As Machined</div>
<svg class="ic" style="left:25.3px;top:463.7px" viewBox="0 0 19 19"><use href="#i-part"/></svg>
<div class="row" style="left:48px;top:463px;transform:scaleX(0.968)">Safety Rail Guide-10 (80 inch&lt;As M</div>
<svg class="ic" style="left:25.3px;top:485.7px" viewBox="0 0 19 19"><use href="#i-part"/></svg>
<div class="row" style="left:48px;top:485px;transform:scaleX(0.982)">Safety Rail-10 (80 inch&lt;As Machine</div>
<svg class="ic" style="left:25.3px;top:507.7px" viewBox="0 0 19 19"><use href="#i-part"/></svg>
<div class="row" style="left:48px;top:507px;transform:scaleX(0.968)">Safety Rail Guide-12 (48 inch&lt;As M</div>
<svg class="ic" style="left:25.3px;top:529.7px" viewBox="0 0 19 19"><use href="#i-part"/></svg>
<div class="row" style="left:48px;top:529px;transform:scaleX(0.982)">Safety Rail-11 (80 inch&lt;As Machine</div>
<svg class="ic" style="left:25.3px;top:551.7px" viewBox="0 0 19 19"><use href="#i-part"/></svg>
<div class="row" style="left:48px;top:551px;transform:scaleX(0.968)">Safety Rail Guide-11 (80 inch&lt;As M</div>
<div class="tri" style="top:579px"></div>
<svg class="ic" style="left:25.3px;top:573.7px" viewBox="0 0 19 19"><use href="#i-assy"/></svg>
<div class="row" style="left:48px;top:573px;transform:scaleX(0.901)">HORIZ VESSEL ELL HEADS-003-1 (D</div>
<div class="tri" style="top:601px"></div>
<svg class="ic" style="left:25.3px;top:595.7px" viewBox="0 0 19 19"><use href="#i-assy"/></svg>
<div class="row" style="left:48px;top:595px;transform:scaleX(0.975)">Davit 14inch Assy-2 (Default)</div>
<svg class="ic" style="left:25.3px;top:617.7px" viewBox="0 0 19 19"><use href="#i-part"/></svg>
<div class="row" style="left:48px;top:617px;transform:scaleX(0.882)">C_PANEL_HD_SAFETY_SWITCH_100</div>
<div class="tri" style="top:645px"></div>
<svg class="ic" style="left:25.3px;top:639.7px" viewBox="0 0 19 19"><use href="#i-assy"/></svg>
<div class="row" style="left:48px;top:639px;transform:scaleX(0.973)">Enclosure-1 (Default)</div>
<div class="tri" style="top:667px"></div>
<svg class="ic" style="left:25.3px;top:661.7px" viewBox="0 0 19 19"><use href="#i-assy"/></svg>
<div class="row" style="left:48px;top:661px;transform:scaleX(0.985)">Route1-1 -&gt;&nbsp; (Default)</div>
<div class="tri" style="top:689px"></div>
<svg class="ic" style="left:25.3px;top:683.7px" viewBox="0 0 19 19"><use href="#i-supp"/></svg>
<div class="row" style="left:48px;top:683px;transform:scaleX(1.0)">pipe support-1 (Default)</div>
</div>
</div>
<!-- dialog -->
<div class="abs" style="left:258px;top:140px;width:326px;height:111px;box-sizing:border-box;border:1px solid #3b86d6;background:#f0f0f0;box-shadow:0 2px 12px 2px rgba(0,0,0,0.28)">
<div class="abs" style="left:0;top:0;width:324px;height:30px;background:#fff"></div>
<div class="abs" style="left:8px;top:5.5px;font-size:12.6px;line-height:20px;color:#2a2a2a;white-space:nowrap">选择性打开</div>
<div class="abs" style="left:5px;top:35px;font-size:13px;line-height:18px;color:#000;white-space:nowrap">要打开的零部件:</div>
<div class="abs" style="left:18px;top:55.5px;width:11px;height:11px;border:1px solid #333;border-radius:50%;background:#fff"></div>
<div class="abs" style="left:21.5px;top:59px;width:6px;height:6px;border-radius:50%;background:#222"></div>
<div class="abs" style="left:34px;top:53px;font-size:13px;line-height:18px;color:#000;white-space:nowrap">所选零部件</div>
<div class="abs" style="left:18px;top:73.5px;width:11px;height:11px;border:1px solid #333;border-radius:50%;background:#fff"></div>
<div class="abs" style="left:34px;top:70.6px;font-size:13px;line-height:18px;color:#000;white-space:nowrap">显示的所有零部件</div>
<div class="abs" style="left:18px;top:90px;font-size:13px;line-height:18px;color:#000;white-space:nowrap;letter-spacing:-0.2px">(使用显示状态和显示/隐藏工具)</div>
<div class="abs" style="left:223px;top:34px;width:90px;height:19px;box-sizing:border-box;border:2px solid #1f7ad6;background:#e4e4e4;text-align:center;font-size:13px;line-height:15px;color:#000">打开选定项</div>
<div class="abs" style="left:223px;top:59px;width:90px;height:19px;box-sizing:border-box;border:1px solid #adadad;background:#e1e1e1;text-align:center;font-size:13px;line-height:17px;color:#000">取消</div>
</div>
<!-- tooltip -->
<div class="abs" style="left:302px;top:125px;width:213px;height:56px;box-sizing:border-box;border:1px solid #c4c4c4;background:#fff;box-shadow:1px 2px 4px rgba(0,0,0,0.18)">
<div class="abs" style="left:7px;top:2px;font-size:14px;font-weight:bold;line-height:18px;color:#111;white-space:nowrap">选择性打开</div>
<div class="abs" style="left:7px;top:19px;font-size:13px;line-height:16px;color:#111;white-space:nowrap">打开带有选定零部件的顶层装配<br>体。</div>
</div>
<svg class="abs" style="left:314px;top:117px" width="18" height="10" viewBox="0 0 18 10"><path d="M2.5 9 L8.7 2 L15 9Z" fill="#fff"/><path d="M2.5 8.6 L8.7 1.8 L15 8.6" fill="none" stroke="#c4c4c4" stroke-width="1"/></svg>
<div class="abs" id="handle-patch" style="left:244.5px;top:552px;width:3px;height:37px;background:#f4f4f6"></div>
</body></html>
